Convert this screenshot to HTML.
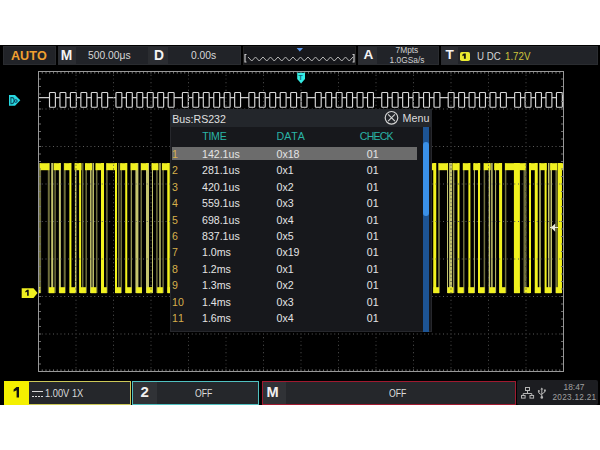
<!DOCTYPE html>
<html><head><meta charset="utf-8"><style>
*{margin:0;padding:0;box-sizing:border-box}
html,body{font-kerning:none;width:600px;height:450px;background:#fff;overflow:hidden;font-family:"Liberation Sans", sans-serif}
.scr{position:absolute;left:0;top:45px;width:600px;height:360px;background:#000}
.abs{position:absolute}
.box{position:absolute;background:#212328;border:1px solid #2a2c30}
.lbl{position:absolute;top:0;bottom:0;background:#2b2d32}
.t{position:absolute;white-space:nowrap;line-height:1}
.tr{position:absolute;left:0;height:14px}
.tr span{position:absolute;top:0;font-size:10.6px;line-height:14px;white-space:nowrap}
.tr .n{color:#d6b04c}
.tr .v{color:#e4e4e4}
svg{position:absolute;left:0;top:0}
</style></head><body>
<div class="scr"></div>
<svg width="600" height="450" viewBox="0 0 600 450">
<rect x="38.10" y="163" width="3" height="130" fill="#6e6e3c"/><rect x="47.80" y="163" width="2" height="130" fill="#6e6e3c"/><rect x="51.20" y="163" width="2" height="130" fill="#c4c46e"/><rect x="54.35" y="163" width="1.5" height="130" fill="#6e6e3c"/><rect x="58.90" y="163" width="2" height="130" fill="#c4c46e"/><rect x="63.70" y="163" width="2" height="130" fill="#6e6e3c"/><rect x="69.40" y="163" width="2" height="130" fill="#f2f21e"/><rect x="74.95" y="163" width="1.5" height="130" fill="#c4c46e"/><rect x="79.10" y="163" width="2" height="130" fill="#f2f21e"/><rect x="81.95" y="163" width="1.5" height="130" fill="#6e6e3c"/><rect x="85.45" y="163" width="1.5" height="130" fill="#6e6e3c"/><rect x="90.05" y="163" width="1.5" height="130" fill="#c4c46e"/><rect x="92.45" y="163" width="1.5" height="130" fill="#c4c46e"/><rect x="95.95" y="163" width="1.5" height="130" fill="#6e6e3c"/><rect x="101.00" y="163" width="3" height="130" fill="#f2f21e"/><rect x="106.15" y="163" width="1.5" height="130" fill="#6e6e3c"/><rect x="115.00" y="163" width="2" height="130" fill="#f2f21e"/><rect x="118.00" y="163" width="1.5" height="130" fill="#6e6e3c"/><rect x="120.50" y="163" width="1.5" height="130" fill="#6e6e3c"/><rect x="125.25" y="163" width="2" height="130" fill="#f2f21e"/><rect x="130.75" y="163" width="1" height="130" fill="#c4c46e"/><rect x="135.40" y="163" width="3" height="130" fill="#c4c46e"/><rect x="140.50" y="163" width="1.5" height="130" fill="#6e6e3c"/><rect x="146.00" y="163" width="3" height="130" fill="#c4c46e"/><rect x="152.00" y="163" width="1" height="130" fill="#c4c46e"/><rect x="156.15" y="163" width="1.5" height="130" fill="#6e6e3c"/><rect x="159.25" y="163" width="1.5" height="130" fill="#c4c46e"/><rect x="162.35" y="163" width="1.5" height="130" fill="#6e6e3c"/><rect x="167.25" y="163" width="2.5" height="130" fill="#f2f21e"/><rect x="433.25" y="163" width="3" height="130" fill="#f2f21e"/><rect x="438.50" y="163" width="1" height="130" fill="#c4c46e"/><rect x="447.00" y="163" width="1" height="130" fill="#c4c46e"/><rect x="449.10" y="163" width="3" height="130" fill="#c4c46e"/><rect x="453.25" y="163" width="1" height="130" fill="#c4c46e"/><rect x="457.50" y="163" width="2" height="130" fill="#f2f21e"/><rect x="463.00" y="163" width="1.5" height="130" fill="#6e6e3c"/><rect x="468.40" y="163" width="2" height="130" fill="#f2f21e"/><rect x="473.90" y="163" width="1" height="130" fill="#c4c46e"/><rect x="478.00" y="163" width="2" height="130" fill="#f2f21e"/><rect x="483.65" y="163" width="1.5" height="130" fill="#6e6e3c"/><rect x="488.65" y="163" width="1.5" height="130" fill="#c4c46e"/><rect x="491.15" y="163" width="1.5" height="130" fill="#c4c46e"/><rect x="495.10" y="163" width="1" height="130" fill="#c4c46e"/><rect x="499.10" y="163" width="3" height="130" fill="#f2f21e"/><rect x="504.85" y="163" width="1.5" height="130" fill="#6e6e3c"/><rect x="513.90" y="163" width="6" height="130" fill="#f2f21e"/><rect x="523.50" y="163" width="3" height="130" fill="#6e6e3c"/><rect x="529.00" y="163" width="2" height="130" fill="#f2f21e"/><rect x="534.75" y="163" width="3" height="130" fill="#f2f21e"/><rect x="539.25" y="163" width="1.5" height="130" fill="#c4c46e"/><rect x="544.60" y="163" width="2" height="130" fill="#f2f21e"/><rect x="548.00" y="163" width="1.5" height="130" fill="#c4c46e"/><rect x="550.50" y="163" width="1.5" height="130" fill="#c4c46e"/><rect x="555.40" y="163" width="1.8" height="130" fill="#6e6e3c"/><rect x="557.65" y="163" width="4.3" height="130" fill="#f2f21e"/><rect x="39.00" y="287.2" width="1.40" height="6" fill="#f0f020"/><rect x="39.80" y="163.2" width="9.60" height="7" fill="#f0f020"/><rect x="48.90" y="287.2" width="5.70" height="6" fill="#f0f020"/><rect x="53.65" y="163.2" width="7.00" height="7" fill="#f0f020"/><rect x="59.35" y="287.2" width="5.70" height="6" fill="#f0f020"/><rect x="64.10" y="163.2" width="7.00" height="7" fill="#f0f020"/><rect x="69.80" y="287.2" width="5.70" height="6" fill="#f0f020"/><rect x="74.55" y="163.2" width="7.00" height="7" fill="#f0f020"/><rect x="80.25" y="287.2" width="5.70" height="6" fill="#f0f020"/><rect x="85.00" y="163.2" width="7.00" height="7" fill="#f0f020"/><rect x="90.70" y="287.2" width="5.70" height="6" fill="#f0f020"/><rect x="95.45" y="163.2" width="7.00" height="7" fill="#f0f020"/><rect x="101.15" y="287.2" width="5.70" height="6" fill="#f0f020"/><rect x="106.25" y="163.2" width="9.60" height="7" fill="#f0f020"/><rect x="115.35" y="287.2" width="5.70" height="6" fill="#f0f020"/><rect x="120.10" y="163.2" width="7.00" height="7" fill="#f0f020"/><rect x="125.80" y="287.2" width="5.70" height="6" fill="#f0f020"/><rect x="130.55" y="163.2" width="7.00" height="7" fill="#f0f020"/><rect x="136.25" y="287.2" width="5.70" height="6" fill="#f0f020"/><rect x="141.00" y="163.2" width="7.00" height="7" fill="#f0f020"/><rect x="146.70" y="287.2" width="5.70" height="6" fill="#f0f020"/><rect x="151.45" y="163.2" width="7.00" height="7" fill="#f0f020"/><rect x="157.15" y="287.2" width="5.70" height="6" fill="#f0f020"/><rect x="161.90" y="163.2" width="7.00" height="7" fill="#f0f020"/><rect x="167.60" y="287.2" width="5.70" height="6" fill="#f0f020"/><rect x="172.70" y="163.2" width="9.60" height="7" fill="#f0f020"/><rect x="181.80" y="287.2" width="5.70" height="6" fill="#f0f020"/><rect x="186.55" y="163.2" width="7.00" height="7" fill="#f0f020"/><rect x="192.25" y="287.2" width="5.70" height="6" fill="#f0f020"/><rect x="197.00" y="163.2" width="7.00" height="7" fill="#f0f020"/><rect x="202.70" y="287.2" width="5.70" height="6" fill="#f0f020"/><rect x="207.45" y="163.2" width="7.00" height="7" fill="#f0f020"/><rect x="213.15" y="287.2" width="5.70" height="6" fill="#f0f020"/><rect x="217.90" y="163.2" width="7.00" height="7" fill="#f0f020"/><rect x="223.60" y="287.2" width="5.70" height="6" fill="#f0f020"/><rect x="228.35" y="163.2" width="7.00" height="7" fill="#f0f020"/><rect x="234.05" y="287.2" width="5.70" height="6" fill="#f0f020"/><rect x="239.15" y="163.2" width="9.60" height="7" fill="#f0f020"/><rect x="248.25" y="287.2" width="5.70" height="6" fill="#f0f020"/><rect x="253.00" y="163.2" width="7.00" height="7" fill="#f0f020"/><rect x="258.70" y="287.2" width="5.70" height="6" fill="#f0f020"/><rect x="263.45" y="163.2" width="7.00" height="7" fill="#f0f020"/><rect x="269.15" y="287.2" width="5.70" height="6" fill="#f0f020"/><rect x="273.90" y="163.2" width="7.00" height="7" fill="#f0f020"/><rect x="279.60" y="287.2" width="5.70" height="6" fill="#f0f020"/><rect x="284.35" y="163.2" width="7.00" height="7" fill="#f0f020"/><rect x="290.05" y="287.2" width="5.70" height="6" fill="#f0f020"/><rect x="294.80" y="163.2" width="7.00" height="7" fill="#f0f020"/><rect x="300.50" y="287.2" width="5.70" height="6" fill="#f0f020"/><rect x="305.60" y="163.2" width="9.60" height="7" fill="#f0f020"/><rect x="314.70" y="287.2" width="5.70" height="6" fill="#f0f020"/><rect x="319.45" y="163.2" width="7.00" height="7" fill="#f0f020"/><rect x="325.15" y="287.2" width="5.70" height="6" fill="#f0f020"/><rect x="329.90" y="163.2" width="7.00" height="7" fill="#f0f020"/><rect x="335.60" y="287.2" width="5.70" height="6" fill="#f0f020"/><rect x="340.35" y="163.2" width="7.00" height="7" fill="#f0f020"/><rect x="346.05" y="287.2" width="5.70" height="6" fill="#f0f020"/><rect x="350.80" y="163.2" width="7.00" height="7" fill="#f0f020"/><rect x="356.50" y="287.2" width="5.70" height="6" fill="#f0f020"/><rect x="361.25" y="163.2" width="7.00" height="7" fill="#f0f020"/><rect x="366.95" y="287.2" width="5.70" height="6" fill="#f0f020"/><rect x="372.05" y="163.2" width="9.60" height="7" fill="#f0f020"/><rect x="381.15" y="287.2" width="5.70" height="6" fill="#f0f020"/><rect x="385.90" y="163.2" width="7.00" height="7" fill="#f0f020"/><rect x="391.60" y="287.2" width="5.70" height="6" fill="#f0f020"/><rect x="396.35" y="163.2" width="7.00" height="7" fill="#f0f020"/><rect x="402.05" y="287.2" width="5.70" height="6" fill="#f0f020"/><rect x="406.80" y="163.2" width="7.00" height="7" fill="#f0f020"/><rect x="412.50" y="287.2" width="5.70" height="6" fill="#f0f020"/><rect x="417.25" y="163.2" width="7.00" height="7" fill="#f0f020"/><rect x="422.95" y="287.2" width="5.70" height="6" fill="#f0f020"/><rect x="427.70" y="163.2" width="7.00" height="7" fill="#f0f020"/><rect x="433.40" y="287.2" width="5.70" height="6" fill="#f0f020"/><rect x="438.50" y="163.2" width="9.60" height="7" fill="#f0f020"/><rect x="447.60" y="287.2" width="5.70" height="6" fill="#f0f020"/><rect x="452.35" y="163.2" width="7.00" height="7" fill="#f0f020"/><rect x="458.05" y="287.2" width="5.70" height="6" fill="#f0f020"/><rect x="462.80" y="163.2" width="7.00" height="7" fill="#f0f020"/><rect x="468.50" y="287.2" width="5.70" height="6" fill="#f0f020"/><rect x="473.25" y="163.2" width="7.00" height="7" fill="#f0f020"/><rect x="478.95" y="287.2" width="5.70" height="6" fill="#f0f020"/><rect x="483.70" y="163.2" width="7.00" height="7" fill="#f0f020"/><rect x="489.40" y="287.2" width="5.70" height="6" fill="#f0f020"/><rect x="494.15" y="163.2" width="7.00" height="7" fill="#f0f020"/><rect x="499.85" y="287.2" width="5.70" height="6" fill="#f0f020"/><rect x="504.95" y="163.2" width="9.60" height="7" fill="#f0f020"/><rect x="514.05" y="287.2" width="5.70" height="6" fill="#f0f020"/><rect x="518.80" y="163.2" width="7.00" height="7" fill="#f0f020"/><rect x="524.50" y="287.2" width="5.70" height="6" fill="#f0f020"/><rect x="529.25" y="163.2" width="7.00" height="7" fill="#f0f020"/><rect x="534.95" y="287.2" width="5.70" height="6" fill="#f0f020"/><rect x="539.70" y="163.2" width="7.00" height="7" fill="#f0f020"/><rect x="545.40" y="287.2" width="5.70" height="6" fill="#f0f020"/><rect x="550.15" y="163.2" width="7.00" height="7" fill="#f0f020"/><rect x="555.85" y="287.2" width="5.70" height="6" fill="#f0f020"/><rect x="560.60" y="163.2" width="2.40" height="7" fill="#f0f020"/>
<line x1="38" y1="97.7" x2="563" y2="97.7" stroke="#cccccc" stroke-width="1.2"/><rect x="49.50" y="92.5" width="5.90" height="14.7" rx="0.8" fill="#000" stroke="#d8d8d8" stroke-width="1.15"/><rect x="59.95" y="92.5" width="5.90" height="14.7" rx="0.8" fill="#000" stroke="#d8d8d8" stroke-width="1.15"/><rect x="70.40" y="92.5" width="5.90" height="14.7" rx="0.8" fill="#000" stroke="#d8d8d8" stroke-width="1.15"/><rect x="80.85" y="92.5" width="5.90" height="14.7" rx="0.8" fill="#000" stroke="#d8d8d8" stroke-width="1.15"/><rect x="91.30" y="92.5" width="5.90" height="14.7" rx="0.8" fill="#000" stroke="#d8d8d8" stroke-width="1.15"/><rect x="101.75" y="92.5" width="5.90" height="14.7" rx="0.8" fill="#000" stroke="#d8d8d8" stroke-width="1.15"/><rect x="115.95" y="92.5" width="5.90" height="14.7" rx="0.8" fill="#000" stroke="#d8d8d8" stroke-width="1.15"/><rect x="126.40" y="92.5" width="5.90" height="14.7" rx="0.8" fill="#000" stroke="#d8d8d8" stroke-width="1.15"/><rect x="136.85" y="92.5" width="5.90" height="14.7" rx="0.8" fill="#000" stroke="#d8d8d8" stroke-width="1.15"/><rect x="147.30" y="92.5" width="5.90" height="14.7" rx="0.8" fill="#000" stroke="#d8d8d8" stroke-width="1.15"/><rect x="157.75" y="92.5" width="5.90" height="14.7" rx="0.8" fill="#000" stroke="#d8d8d8" stroke-width="1.15"/><rect x="168.20" y="92.5" width="5.90" height="14.7" rx="0.8" fill="#000" stroke="#d8d8d8" stroke-width="1.15"/><rect x="182.40" y="92.5" width="5.90" height="14.7" rx="0.8" fill="#000" stroke="#d8d8d8" stroke-width="1.15"/><rect x="192.85" y="92.5" width="5.90" height="14.7" rx="0.8" fill="#000" stroke="#d8d8d8" stroke-width="1.15"/><rect x="203.30" y="92.5" width="5.90" height="14.7" rx="0.8" fill="#000" stroke="#d8d8d8" stroke-width="1.15"/><rect x="213.75" y="92.5" width="5.90" height="14.7" rx="0.8" fill="#000" stroke="#d8d8d8" stroke-width="1.15"/><rect x="224.20" y="92.5" width="5.90" height="14.7" rx="0.8" fill="#000" stroke="#d8d8d8" stroke-width="1.15"/><rect x="234.65" y="92.5" width="5.90" height="14.7" rx="0.8" fill="#000" stroke="#d8d8d8" stroke-width="1.15"/><rect x="248.85" y="92.5" width="5.90" height="14.7" rx="0.8" fill="#000" stroke="#d8d8d8" stroke-width="1.15"/><rect x="259.30" y="92.5" width="5.90" height="14.7" rx="0.8" fill="#000" stroke="#d8d8d8" stroke-width="1.15"/><rect x="269.75" y="92.5" width="5.90" height="14.7" rx="0.8" fill="#000" stroke="#d8d8d8" stroke-width="1.15"/><rect x="280.20" y="92.5" width="5.90" height="14.7" rx="0.8" fill="#000" stroke="#d8d8d8" stroke-width="1.15"/><rect x="290.65" y="92.5" width="5.90" height="14.7" rx="0.8" fill="#000" stroke="#d8d8d8" stroke-width="1.15"/><rect x="301.10" y="92.5" width="5.90" height="14.7" rx="0.8" fill="#000" stroke="#d8d8d8" stroke-width="1.15"/><rect x="315.30" y="92.5" width="5.90" height="14.7" rx="0.8" fill="#000" stroke="#d8d8d8" stroke-width="1.15"/><rect x="325.75" y="92.5" width="5.90" height="14.7" rx="0.8" fill="#000" stroke="#d8d8d8" stroke-width="1.15"/><rect x="336.20" y="92.5" width="5.90" height="14.7" rx="0.8" fill="#000" stroke="#d8d8d8" stroke-width="1.15"/><rect x="346.65" y="92.5" width="5.90" height="14.7" rx="0.8" fill="#000" stroke="#d8d8d8" stroke-width="1.15"/><rect x="357.10" y="92.5" width="5.90" height="14.7" rx="0.8" fill="#000" stroke="#d8d8d8" stroke-width="1.15"/><rect x="367.55" y="92.5" width="5.90" height="14.7" rx="0.8" fill="#000" stroke="#d8d8d8" stroke-width="1.15"/><rect x="381.75" y="92.5" width="5.90" height="14.7" rx="0.8" fill="#000" stroke="#d8d8d8" stroke-width="1.15"/><rect x="392.20" y="92.5" width="5.90" height="14.7" rx="0.8" fill="#000" stroke="#d8d8d8" stroke-width="1.15"/><rect x="402.65" y="92.5" width="5.90" height="14.7" rx="0.8" fill="#000" stroke="#d8d8d8" stroke-width="1.15"/><rect x="413.10" y="92.5" width="5.90" height="14.7" rx="0.8" fill="#000" stroke="#d8d8d8" stroke-width="1.15"/><rect x="423.55" y="92.5" width="5.90" height="14.7" rx="0.8" fill="#000" stroke="#d8d8d8" stroke-width="1.15"/><rect x="434.00" y="92.5" width="5.90" height="14.7" rx="0.8" fill="#000" stroke="#d8d8d8" stroke-width="1.15"/><rect x="448.20" y="92.5" width="5.90" height="14.7" rx="0.8" fill="#000" stroke="#d8d8d8" stroke-width="1.15"/><rect x="458.65" y="92.5" width="5.90" height="14.7" rx="0.8" fill="#000" stroke="#d8d8d8" stroke-width="1.15"/><rect x="469.10" y="92.5" width="5.90" height="14.7" rx="0.8" fill="#000" stroke="#d8d8d8" stroke-width="1.15"/><rect x="479.55" y="92.5" width="5.90" height="14.7" rx="0.8" fill="#000" stroke="#d8d8d8" stroke-width="1.15"/><rect x="490.00" y="92.5" width="5.90" height="14.7" rx="0.8" fill="#000" stroke="#d8d8d8" stroke-width="1.15"/><rect x="500.45" y="92.5" width="5.90" height="14.7" rx="0.8" fill="#000" stroke="#d8d8d8" stroke-width="1.15"/><rect x="514.65" y="92.5" width="5.90" height="14.7" rx="0.8" fill="#000" stroke="#d8d8d8" stroke-width="1.15"/><rect x="525.10" y="92.5" width="5.90" height="14.7" rx="0.8" fill="#000" stroke="#d8d8d8" stroke-width="1.15"/><rect x="535.55" y="92.5" width="5.90" height="14.7" rx="0.8" fill="#000" stroke="#d8d8d8" stroke-width="1.15"/><rect x="546.00" y="92.5" width="5.90" height="14.7" rx="0.8" fill="#000" stroke="#d8d8d8" stroke-width="1.15"/><rect x="556.45" y="92.5" width="5.90" height="14.7" rx="0.8" fill="#000" stroke="#d8d8d8" stroke-width="1.15"/>
<g fill="#5a5a5a"><rect x="75.50" y="74.75" width="1" height="1"/><rect x="75.50" y="82.25" width="1" height="1"/><rect x="75.50" y="89.75" width="1" height="1"/><rect x="75.50" y="97.25" width="1" height="1"/><rect x="75.50" y="104.75" width="1" height="1"/><rect x="75.50" y="112.25" width="1" height="1"/><rect x="75.50" y="119.75" width="1" height="1"/><rect x="75.50" y="127.25" width="1" height="1"/><rect x="75.50" y="134.75" width="1" height="1"/><rect x="75.50" y="142.25" width="1" height="1"/><rect x="75.50" y="149.75" width="1" height="1"/><rect x="75.50" y="157.25" width="1" height="1"/><rect x="75.50" y="164.75" width="1" height="1"/><rect x="75.50" y="172.25" width="1" height="1"/><rect x="75.50" y="179.75" width="1" height="1"/><rect x="75.50" y="187.25" width="1" height="1"/><rect x="75.50" y="194.75" width="1" height="1"/><rect x="75.50" y="202.25" width="1" height="1"/><rect x="75.50" y="209.75" width="1" height="1"/><rect x="75.50" y="217.25" width="1" height="1"/><rect x="75.50" y="224.75" width="1" height="1"/><rect x="75.50" y="232.25" width="1" height="1"/><rect x="75.50" y="239.75" width="1" height="1"/><rect x="75.50" y="247.25" width="1" height="1"/><rect x="75.50" y="254.75" width="1" height="1"/><rect x="75.50" y="262.25" width="1" height="1"/><rect x="75.50" y="269.75" width="1" height="1"/><rect x="75.50" y="277.25" width="1" height="1"/><rect x="75.50" y="284.75" width="1" height="1"/><rect x="75.50" y="292.25" width="1" height="1"/><rect x="75.50" y="299.75" width="1" height="1"/><rect x="75.50" y="307.25" width="1" height="1"/><rect x="75.50" y="314.75" width="1" height="1"/><rect x="75.50" y="322.25" width="1" height="1"/><rect x="75.50" y="329.75" width="1" height="1"/><rect x="75.50" y="337.25" width="1" height="1"/><rect x="75.50" y="344.75" width="1" height="1"/><rect x="75.50" y="352.25" width="1" height="1"/><rect x="75.50" y="359.75" width="1" height="1"/><rect x="75.50" y="367.25" width="1" height="1"/><rect x="113.00" y="74.75" width="1" height="1"/><rect x="113.00" y="82.25" width="1" height="1"/><rect x="113.00" y="89.75" width="1" height="1"/><rect x="113.00" y="97.25" width="1" height="1"/><rect x="113.00" y="104.75" width="1" height="1"/><rect x="113.00" y="112.25" width="1" height="1"/><rect x="113.00" y="119.75" width="1" height="1"/><rect x="113.00" y="127.25" width="1" height="1"/><rect x="113.00" y="134.75" width="1" height="1"/><rect x="113.00" y="142.25" width="1" height="1"/><rect x="113.00" y="149.75" width="1" height="1"/><rect x="113.00" y="157.25" width="1" height="1"/><rect x="113.00" y="164.75" width="1" height="1"/><rect x="113.00" y="172.25" width="1" height="1"/><rect x="113.00" y="179.75" width="1" height="1"/><rect x="113.00" y="187.25" width="1" height="1"/><rect x="113.00" y="194.75" width="1" height="1"/><rect x="113.00" y="202.25" width="1" height="1"/><rect x="113.00" y="209.75" width="1" height="1"/><rect x="113.00" y="217.25" width="1" height="1"/><rect x="113.00" y="224.75" width="1" height="1"/><rect x="113.00" y="232.25" width="1" height="1"/><rect x="113.00" y="239.75" width="1" height="1"/><rect x="113.00" y="247.25" width="1" height="1"/><rect x="113.00" y="254.75" width="1" height="1"/><rect x="113.00" y="262.25" width="1" height="1"/><rect x="113.00" y="269.75" width="1" height="1"/><rect x="113.00" y="277.25" width="1" height="1"/><rect x="113.00" y="284.75" width="1" height="1"/><rect x="113.00" y="292.25" width="1" height="1"/><rect x="113.00" y="299.75" width="1" height="1"/><rect x="113.00" y="307.25" width="1" height="1"/><rect x="113.00" y="314.75" width="1" height="1"/><rect x="113.00" y="322.25" width="1" height="1"/><rect x="113.00" y="329.75" width="1" height="1"/><rect x="113.00" y="337.25" width="1" height="1"/><rect x="113.00" y="344.75" width="1" height="1"/><rect x="113.00" y="352.25" width="1" height="1"/><rect x="113.00" y="359.75" width="1" height="1"/><rect x="113.00" y="367.25" width="1" height="1"/><rect x="150.50" y="74.75" width="1" height="1"/><rect x="150.50" y="82.25" width="1" height="1"/><rect x="150.50" y="89.75" width="1" height="1"/><rect x="150.50" y="97.25" width="1" height="1"/><rect x="150.50" y="104.75" width="1" height="1"/><rect x="150.50" y="112.25" width="1" height="1"/><rect x="150.50" y="119.75" width="1" height="1"/><rect x="150.50" y="127.25" width="1" height="1"/><rect x="150.50" y="134.75" width="1" height="1"/><rect x="150.50" y="142.25" width="1" height="1"/><rect x="150.50" y="149.75" width="1" height="1"/><rect x="150.50" y="157.25" width="1" height="1"/><rect x="150.50" y="164.75" width="1" height="1"/><rect x="150.50" y="172.25" width="1" height="1"/><rect x="150.50" y="179.75" width="1" height="1"/><rect x="150.50" y="187.25" width="1" height="1"/><rect x="150.50" y="194.75" width="1" height="1"/><rect x="150.50" y="202.25" width="1" height="1"/><rect x="150.50" y="209.75" width="1" height="1"/><rect x="150.50" y="217.25" width="1" height="1"/><rect x="150.50" y="224.75" width="1" height="1"/><rect x="150.50" y="232.25" width="1" height="1"/><rect x="150.50" y="239.75" width="1" height="1"/><rect x="150.50" y="247.25" width="1" height="1"/><rect x="150.50" y="254.75" width="1" height="1"/><rect x="150.50" y="262.25" width="1" height="1"/><rect x="150.50" y="269.75" width="1" height="1"/><rect x="150.50" y="277.25" width="1" height="1"/><rect x="150.50" y="284.75" width="1" height="1"/><rect x="150.50" y="292.25" width="1" height="1"/><rect x="150.50" y="299.75" width="1" height="1"/><rect x="150.50" y="307.25" width="1" height="1"/><rect x="150.50" y="314.75" width="1" height="1"/><rect x="150.50" y="322.25" width="1" height="1"/><rect x="150.50" y="329.75" width="1" height="1"/><rect x="150.50" y="337.25" width="1" height="1"/><rect x="150.50" y="344.75" width="1" height="1"/><rect x="150.50" y="352.25" width="1" height="1"/><rect x="150.50" y="359.75" width="1" height="1"/><rect x="150.50" y="367.25" width="1" height="1"/><rect x="188.00" y="74.75" width="1" height="1"/><rect x="188.00" y="82.25" width="1" height="1"/><rect x="188.00" y="89.75" width="1" height="1"/><rect x="188.00" y="97.25" width="1" height="1"/><rect x="188.00" y="104.75" width="1" height="1"/><rect x="188.00" y="112.25" width="1" height="1"/><rect x="188.00" y="119.75" width="1" height="1"/><rect x="188.00" y="127.25" width="1" height="1"/><rect x="188.00" y="134.75" width="1" height="1"/><rect x="188.00" y="142.25" width="1" height="1"/><rect x="188.00" y="149.75" width="1" height="1"/><rect x="188.00" y="157.25" width="1" height="1"/><rect x="188.00" y="164.75" width="1" height="1"/><rect x="188.00" y="172.25" width="1" height="1"/><rect x="188.00" y="179.75" width="1" height="1"/><rect x="188.00" y="187.25" width="1" height="1"/><rect x="188.00" y="194.75" width="1" height="1"/><rect x="188.00" y="202.25" width="1" height="1"/><rect x="188.00" y="209.75" width="1" height="1"/><rect x="188.00" y="217.25" width="1" height="1"/><rect x="188.00" y="224.75" width="1" height="1"/><rect x="188.00" y="232.25" width="1" height="1"/><rect x="188.00" y="239.75" width="1" height="1"/><rect x="188.00" y="247.25" width="1" height="1"/><rect x="188.00" y="254.75" width="1" height="1"/><rect x="188.00" y="262.25" width="1" height="1"/><rect x="188.00" y="269.75" width="1" height="1"/><rect x="188.00" y="277.25" width="1" height="1"/><rect x="188.00" y="284.75" width="1" height="1"/><rect x="188.00" y="292.25" width="1" height="1"/><rect x="188.00" y="299.75" width="1" height="1"/><rect x="188.00" y="307.25" width="1" height="1"/><rect x="188.00" y="314.75" width="1" height="1"/><rect x="188.00" y="322.25" width="1" height="1"/><rect x="188.00" y="329.75" width="1" height="1"/><rect x="188.00" y="337.25" width="1" height="1"/><rect x="188.00" y="344.75" width="1" height="1"/><rect x="188.00" y="352.25" width="1" height="1"/><rect x="188.00" y="359.75" width="1" height="1"/><rect x="188.00" y="367.25" width="1" height="1"/><rect x="225.50" y="74.75" width="1" height="1"/><rect x="225.50" y="82.25" width="1" height="1"/><rect x="225.50" y="89.75" width="1" height="1"/><rect x="225.50" y="97.25" width="1" height="1"/><rect x="225.50" y="104.75" width="1" height="1"/><rect x="225.50" y="112.25" width="1" height="1"/><rect x="225.50" y="119.75" width="1" height="1"/><rect x="225.50" y="127.25" width="1" height="1"/><rect x="225.50" y="134.75" width="1" height="1"/><rect x="225.50" y="142.25" width="1" height="1"/><rect x="225.50" y="149.75" width="1" height="1"/><rect x="225.50" y="157.25" width="1" height="1"/><rect x="225.50" y="164.75" width="1" height="1"/><rect x="225.50" y="172.25" width="1" height="1"/><rect x="225.50" y="179.75" width="1" height="1"/><rect x="225.50" y="187.25" width="1" height="1"/><rect x="225.50" y="194.75" width="1" height="1"/><rect x="225.50" y="202.25" width="1" height="1"/><rect x="225.50" y="209.75" width="1" height="1"/><rect x="225.50" y="217.25" width="1" height="1"/><rect x="225.50" y="224.75" width="1" height="1"/><rect x="225.50" y="232.25" width="1" height="1"/><rect x="225.50" y="239.75" width="1" height="1"/><rect x="225.50" y="247.25" width="1" height="1"/><rect x="225.50" y="254.75" width="1" height="1"/><rect x="225.50" y="262.25" width="1" height="1"/><rect x="225.50" y="269.75" width="1" height="1"/><rect x="225.50" y="277.25" width="1" height="1"/><rect x="225.50" y="284.75" width="1" height="1"/><rect x="225.50" y="292.25" width="1" height="1"/><rect x="225.50" y="299.75" width="1" height="1"/><rect x="225.50" y="307.25" width="1" height="1"/><rect x="225.50" y="314.75" width="1" height="1"/><rect x="225.50" y="322.25" width="1" height="1"/><rect x="225.50" y="329.75" width="1" height="1"/><rect x="225.50" y="337.25" width="1" height="1"/><rect x="225.50" y="344.75" width="1" height="1"/><rect x="225.50" y="352.25" width="1" height="1"/><rect x="225.50" y="359.75" width="1" height="1"/><rect x="225.50" y="367.25" width="1" height="1"/><rect x="263.00" y="74.75" width="1" height="1"/><rect x="263.00" y="82.25" width="1" height="1"/><rect x="263.00" y="89.75" width="1" height="1"/><rect x="263.00" y="97.25" width="1" height="1"/><rect x="263.00" y="104.75" width="1" height="1"/><rect x="263.00" y="112.25" width="1" height="1"/><rect x="263.00" y="119.75" width="1" height="1"/><rect x="263.00" y="127.25" width="1" height="1"/><rect x="263.00" y="134.75" width="1" height="1"/><rect x="263.00" y="142.25" width="1" height="1"/><rect x="263.00" y="149.75" width="1" height="1"/><rect x="263.00" y="157.25" width="1" height="1"/><rect x="263.00" y="164.75" width="1" height="1"/><rect x="263.00" y="172.25" width="1" height="1"/><rect x="263.00" y="179.75" width="1" height="1"/><rect x="263.00" y="187.25" width="1" height="1"/><rect x="263.00" y="194.75" width="1" height="1"/><rect x="263.00" y="202.25" width="1" height="1"/><rect x="263.00" y="209.75" width="1" height="1"/><rect x="263.00" y="217.25" width="1" height="1"/><rect x="263.00" y="224.75" width="1" height="1"/><rect x="263.00" y="232.25" width="1" height="1"/><rect x="263.00" y="239.75" width="1" height="1"/><rect x="263.00" y="247.25" width="1" height="1"/><rect x="263.00" y="254.75" width="1" height="1"/><rect x="263.00" y="262.25" width="1" height="1"/><rect x="263.00" y="269.75" width="1" height="1"/><rect x="263.00" y="277.25" width="1" height="1"/><rect x="263.00" y="284.75" width="1" height="1"/><rect x="263.00" y="292.25" width="1" height="1"/><rect x="263.00" y="299.75" width="1" height="1"/><rect x="263.00" y="307.25" width="1" height="1"/><rect x="263.00" y="314.75" width="1" height="1"/><rect x="263.00" y="322.25" width="1" height="1"/><rect x="263.00" y="329.75" width="1" height="1"/><rect x="263.00" y="337.25" width="1" height="1"/><rect x="263.00" y="344.75" width="1" height="1"/><rect x="263.00" y="352.25" width="1" height="1"/><rect x="263.00" y="359.75" width="1" height="1"/><rect x="263.00" y="367.25" width="1" height="1"/><rect x="300.50" y="74.75" width="1" height="1"/><rect x="300.50" y="82.25" width="1" height="1"/><rect x="300.50" y="89.75" width="1" height="1"/><rect x="300.50" y="97.25" width="1" height="1"/><rect x="300.50" y="104.75" width="1" height="1"/><rect x="300.50" y="112.25" width="1" height="1"/><rect x="300.50" y="119.75" width="1" height="1"/><rect x="300.50" y="127.25" width="1" height="1"/><rect x="300.50" y="134.75" width="1" height="1"/><rect x="300.50" y="142.25" width="1" height="1"/><rect x="300.50" y="149.75" width="1" height="1"/><rect x="300.50" y="157.25" width="1" height="1"/><rect x="300.50" y="164.75" width="1" height="1"/><rect x="300.50" y="172.25" width="1" height="1"/><rect x="300.50" y="179.75" width="1" height="1"/><rect x="300.50" y="187.25" width="1" height="1"/><rect x="300.50" y="194.75" width="1" height="1"/><rect x="300.50" y="202.25" width="1" height="1"/><rect x="300.50" y="209.75" width="1" height="1"/><rect x="300.50" y="217.25" width="1" height="1"/><rect x="300.50" y="224.75" width="1" height="1"/><rect x="300.50" y="232.25" width="1" height="1"/><rect x="300.50" y="239.75" width="1" height="1"/><rect x="300.50" y="247.25" width="1" height="1"/><rect x="300.50" y="254.75" width="1" height="1"/><rect x="300.50" y="262.25" width="1" height="1"/><rect x="300.50" y="269.75" width="1" height="1"/><rect x="300.50" y="277.25" width="1" height="1"/><rect x="300.50" y="284.75" width="1" height="1"/><rect x="300.50" y="292.25" width="1" height="1"/><rect x="300.50" y="299.75" width="1" height="1"/><rect x="300.50" y="307.25" width="1" height="1"/><rect x="300.50" y="314.75" width="1" height="1"/><rect x="300.50" y="322.25" width="1" height="1"/><rect x="300.50" y="329.75" width="1" height="1"/><rect x="300.50" y="337.25" width="1" height="1"/><rect x="300.50" y="344.75" width="1" height="1"/><rect x="300.50" y="352.25" width="1" height="1"/><rect x="300.50" y="359.75" width="1" height="1"/><rect x="300.50" y="367.25" width="1" height="1"/><rect x="338.00" y="74.75" width="1" height="1"/><rect x="338.00" y="82.25" width="1" height="1"/><rect x="338.00" y="89.75" width="1" height="1"/><rect x="338.00" y="97.25" width="1" height="1"/><rect x="338.00" y="104.75" width="1" height="1"/><rect x="338.00" y="112.25" width="1" height="1"/><rect x="338.00" y="119.75" width="1" height="1"/><rect x="338.00" y="127.25" width="1" height="1"/><rect x="338.00" y="134.75" width="1" height="1"/><rect x="338.00" y="142.25" width="1" height="1"/><rect x="338.00" y="149.75" width="1" height="1"/><rect x="338.00" y="157.25" width="1" height="1"/><rect x="338.00" y="164.75" width="1" height="1"/><rect x="338.00" y="172.25" width="1" height="1"/><rect x="338.00" y="179.75" width="1" height="1"/><rect x="338.00" y="187.25" width="1" height="1"/><rect x="338.00" y="194.75" width="1" height="1"/><rect x="338.00" y="202.25" width="1" height="1"/><rect x="338.00" y="209.75" width="1" height="1"/><rect x="338.00" y="217.25" width="1" height="1"/><rect x="338.00" y="224.75" width="1" height="1"/><rect x="338.00" y="232.25" width="1" height="1"/><rect x="338.00" y="239.75" width="1" height="1"/><rect x="338.00" y="247.25" width="1" height="1"/><rect x="338.00" y="254.75" width="1" height="1"/><rect x="338.00" y="262.25" width="1" height="1"/><rect x="338.00" y="269.75" width="1" height="1"/><rect x="338.00" y="277.25" width="1" height="1"/><rect x="338.00" y="284.75" width="1" height="1"/><rect x="338.00" y="292.25" width="1" height="1"/><rect x="338.00" y="299.75" width="1" height="1"/><rect x="338.00" y="307.25" width="1" height="1"/><rect x="338.00" y="314.75" width="1" height="1"/><rect x="338.00" y="322.25" width="1" height="1"/><rect x="338.00" y="329.75" width="1" height="1"/><rect x="338.00" y="337.25" width="1" height="1"/><rect x="338.00" y="344.75" width="1" height="1"/><rect x="338.00" y="352.25" width="1" height="1"/><rect x="338.00" y="359.75" width="1" height="1"/><rect x="338.00" y="367.25" width="1" height="1"/><rect x="375.50" y="74.75" width="1" height="1"/><rect x="375.50" y="82.25" width="1" height="1"/><rect x="375.50" y="89.75" width="1" height="1"/><rect x="375.50" y="97.25" width="1" height="1"/><rect x="375.50" y="104.75" width="1" height="1"/><rect x="375.50" y="112.25" width="1" height="1"/><rect x="375.50" y="119.75" width="1" height="1"/><rect x="375.50" y="127.25" width="1" height="1"/><rect x="375.50" y="134.75" width="1" height="1"/><rect x="375.50" y="142.25" width="1" height="1"/><rect x="375.50" y="149.75" width="1" height="1"/><rect x="375.50" y="157.25" width="1" height="1"/><rect x="375.50" y="164.75" width="1" height="1"/><rect x="375.50" y="172.25" width="1" height="1"/><rect x="375.50" y="179.75" width="1" height="1"/><rect x="375.50" y="187.25" width="1" height="1"/><rect x="375.50" y="194.75" width="1" height="1"/><rect x="375.50" y="202.25" width="1" height="1"/><rect x="375.50" y="209.75" width="1" height="1"/><rect x="375.50" y="217.25" width="1" height="1"/><rect x="375.50" y="224.75" width="1" height="1"/><rect x="375.50" y="232.25" width="1" height="1"/><rect x="375.50" y="239.75" width="1" height="1"/><rect x="375.50" y="247.25" width="1" height="1"/><rect x="375.50" y="254.75" width="1" height="1"/><rect x="375.50" y="262.25" width="1" height="1"/><rect x="375.50" y="269.75" width="1" height="1"/><rect x="375.50" y="277.25" width="1" height="1"/><rect x="375.50" y="284.75" width="1" height="1"/><rect x="375.50" y="292.25" width="1" height="1"/><rect x="375.50" y="299.75" width="1" height="1"/><rect x="375.50" y="307.25" width="1" height="1"/><rect x="375.50" y="314.75" width="1" height="1"/><rect x="375.50" y="322.25" width="1" height="1"/><rect x="375.50" y="329.75" width="1" height="1"/><rect x="375.50" y="337.25" width="1" height="1"/><rect x="375.50" y="344.75" width="1" height="1"/><rect x="375.50" y="352.25" width="1" height="1"/><rect x="375.50" y="359.75" width="1" height="1"/><rect x="375.50" y="367.25" width="1" height="1"/><rect x="413.00" y="74.75" width="1" height="1"/><rect x="413.00" y="82.25" width="1" height="1"/><rect x="413.00" y="89.75" width="1" height="1"/><rect x="413.00" y="97.25" width="1" height="1"/><rect x="413.00" y="104.75" width="1" height="1"/><rect x="413.00" y="112.25" width="1" height="1"/><rect x="413.00" y="119.75" width="1" height="1"/><rect x="413.00" y="127.25" width="1" height="1"/><rect x="413.00" y="134.75" width="1" height="1"/><rect x="413.00" y="142.25" width="1" height="1"/><rect x="413.00" y="149.75" width="1" height="1"/><rect x="413.00" y="157.25" width="1" height="1"/><rect x="413.00" y="164.75" width="1" height="1"/><rect x="413.00" y="172.25" width="1" height="1"/><rect x="413.00" y="179.75" width="1" height="1"/><rect x="413.00" y="187.25" width="1" height="1"/><rect x="413.00" y="194.75" width="1" height="1"/><rect x="413.00" y="202.25" width="1" height="1"/><rect x="413.00" y="209.75" width="1" height="1"/><rect x="413.00" y="217.25" width="1" height="1"/><rect x="413.00" y="224.75" width="1" height="1"/><rect x="413.00" y="232.25" width="1" height="1"/><rect x="413.00" y="239.75" width="1" height="1"/><rect x="413.00" y="247.25" width="1" height="1"/><rect x="413.00" y="254.75" width="1" height="1"/><rect x="413.00" y="262.25" width="1" height="1"/><rect x="413.00" y="269.75" width="1" height="1"/><rect x="413.00" y="277.25" width="1" height="1"/><rect x="413.00" y="284.75" width="1" height="1"/><rect x="413.00" y="292.25" width="1" height="1"/><rect x="413.00" y="299.75" width="1" height="1"/><rect x="413.00" y="307.25" width="1" height="1"/><rect x="413.00" y="314.75" width="1" height="1"/><rect x="413.00" y="322.25" width="1" height="1"/><rect x="413.00" y="329.75" width="1" height="1"/><rect x="413.00" y="337.25" width="1" height="1"/><rect x="413.00" y="344.75" width="1" height="1"/><rect x="413.00" y="352.25" width="1" height="1"/><rect x="413.00" y="359.75" width="1" height="1"/><rect x="413.00" y="367.25" width="1" height="1"/><rect x="450.50" y="74.75" width="1" height="1"/><rect x="450.50" y="82.25" width="1" height="1"/><rect x="450.50" y="89.75" width="1" height="1"/><rect x="450.50" y="97.25" width="1" height="1"/><rect x="450.50" y="104.75" width="1" height="1"/><rect x="450.50" y="112.25" width="1" height="1"/><rect x="450.50" y="119.75" width="1" height="1"/><rect x="450.50" y="127.25" width="1" height="1"/><rect x="450.50" y="134.75" width="1" height="1"/><rect x="450.50" y="142.25" width="1" height="1"/><rect x="450.50" y="149.75" width="1" height="1"/><rect x="450.50" y="157.25" width="1" height="1"/><rect x="450.50" y="164.75" width="1" height="1"/><rect x="450.50" y="172.25" width="1" height="1"/><rect x="450.50" y="179.75" width="1" height="1"/><rect x="450.50" y="187.25" width="1" height="1"/><rect x="450.50" y="194.75" width="1" height="1"/><rect x="450.50" y="202.25" width="1" height="1"/><rect x="450.50" y="209.75" width="1" height="1"/><rect x="450.50" y="217.25" width="1" height="1"/><rect x="450.50" y="224.75" width="1" height="1"/><rect x="450.50" y="232.25" width="1" height="1"/><rect x="450.50" y="239.75" width="1" height="1"/><rect x="450.50" y="247.25" width="1" height="1"/><rect x="450.50" y="254.75" width="1" height="1"/><rect x="450.50" y="262.25" width="1" height="1"/><rect x="450.50" y="269.75" width="1" height="1"/><rect x="450.50" y="277.25" width="1" height="1"/><rect x="450.50" y="284.75" width="1" height="1"/><rect x="450.50" y="292.25" width="1" height="1"/><rect x="450.50" y="299.75" width="1" height="1"/><rect x="450.50" y="307.25" width="1" height="1"/><rect x="450.50" y="314.75" width="1" height="1"/><rect x="450.50" y="322.25" width="1" height="1"/><rect x="450.50" y="329.75" width="1" height="1"/><rect x="450.50" y="337.25" width="1" height="1"/><rect x="450.50" y="344.75" width="1" height="1"/><rect x="450.50" y="352.25" width="1" height="1"/><rect x="450.50" y="359.75" width="1" height="1"/><rect x="450.50" y="367.25" width="1" height="1"/><rect x="488.00" y="74.75" width="1" height="1"/><rect x="488.00" y="82.25" width="1" height="1"/><rect x="488.00" y="89.75" width="1" height="1"/><rect x="488.00" y="97.25" width="1" height="1"/><rect x="488.00" y="104.75" width="1" height="1"/><rect x="488.00" y="112.25" width="1" height="1"/><rect x="488.00" y="119.75" width="1" height="1"/><rect x="488.00" y="127.25" width="1" height="1"/><rect x="488.00" y="134.75" width="1" height="1"/><rect x="488.00" y="142.25" width="1" height="1"/><rect x="488.00" y="149.75" width="1" height="1"/><rect x="488.00" y="157.25" width="1" height="1"/><rect x="488.00" y="164.75" width="1" height="1"/><rect x="488.00" y="172.25" width="1" height="1"/><rect x="488.00" y="179.75" width="1" height="1"/><rect x="488.00" y="187.25" width="1" height="1"/><rect x="488.00" y="194.75" width="1" height="1"/><rect x="488.00" y="202.25" width="1" height="1"/><rect x="488.00" y="209.75" width="1" height="1"/><rect x="488.00" y="217.25" width="1" height="1"/><rect x="488.00" y="224.75" width="1" height="1"/><rect x="488.00" y="232.25" width="1" height="1"/><rect x="488.00" y="239.75" width="1" height="1"/><rect x="488.00" y="247.25" width="1" height="1"/><rect x="488.00" y="254.75" width="1" height="1"/><rect x="488.00" y="262.25" width="1" height="1"/><rect x="488.00" y="269.75" width="1" height="1"/><rect x="488.00" y="277.25" width="1" height="1"/><rect x="488.00" y="284.75" width="1" height="1"/><rect x="488.00" y="292.25" width="1" height="1"/><rect x="488.00" y="299.75" width="1" height="1"/><rect x="488.00" y="307.25" width="1" height="1"/><rect x="488.00" y="314.75" width="1" height="1"/><rect x="488.00" y="322.25" width="1" height="1"/><rect x="488.00" y="329.75" width="1" height="1"/><rect x="488.00" y="337.25" width="1" height="1"/><rect x="488.00" y="344.75" width="1" height="1"/><rect x="488.00" y="352.25" width="1" height="1"/><rect x="488.00" y="359.75" width="1" height="1"/><rect x="488.00" y="367.25" width="1" height="1"/><rect x="525.50" y="74.75" width="1" height="1"/><rect x="525.50" y="82.25" width="1" height="1"/><rect x="525.50" y="89.75" width="1" height="1"/><rect x="525.50" y="97.25" width="1" height="1"/><rect x="525.50" y="104.75" width="1" height="1"/><rect x="525.50" y="112.25" width="1" height="1"/><rect x="525.50" y="119.75" width="1" height="1"/><rect x="525.50" y="127.25" width="1" height="1"/><rect x="525.50" y="134.75" width="1" height="1"/><rect x="525.50" y="142.25" width="1" height="1"/><rect x="525.50" y="149.75" width="1" height="1"/><rect x="525.50" y="157.25" width="1" height="1"/><rect x="525.50" y="164.75" width="1" height="1"/><rect x="525.50" y="172.25" width="1" height="1"/><rect x="525.50" y="179.75" width="1" height="1"/><rect x="525.50" y="187.25" width="1" height="1"/><rect x="525.50" y="194.75" width="1" height="1"/><rect x="525.50" y="202.25" width="1" height="1"/><rect x="525.50" y="209.75" width="1" height="1"/><rect x="525.50" y="217.25" width="1" height="1"/><rect x="525.50" y="224.75" width="1" height="1"/><rect x="525.50" y="232.25" width="1" height="1"/><rect x="525.50" y="239.75" width="1" height="1"/><rect x="525.50" y="247.25" width="1" height="1"/><rect x="525.50" y="254.75" width="1" height="1"/><rect x="525.50" y="262.25" width="1" height="1"/><rect x="525.50" y="269.75" width="1" height="1"/><rect x="525.50" y="277.25" width="1" height="1"/><rect x="525.50" y="284.75" width="1" height="1"/><rect x="525.50" y="292.25" width="1" height="1"/><rect x="525.50" y="299.75" width="1" height="1"/><rect x="525.50" y="307.25" width="1" height="1"/><rect x="525.50" y="314.75" width="1" height="1"/><rect x="525.50" y="322.25" width="1" height="1"/><rect x="525.50" y="329.75" width="1" height="1"/><rect x="525.50" y="337.25" width="1" height="1"/><rect x="525.50" y="344.75" width="1" height="1"/><rect x="525.50" y="352.25" width="1" height="1"/><rect x="525.50" y="359.75" width="1" height="1"/><rect x="525.50" y="367.25" width="1" height="1"/><rect x="41.75" y="108.50" width="1" height="1"/><rect x="45.50" y="108.50" width="1" height="1"/><rect x="49.25" y="108.50" width="1" height="1"/><rect x="53.00" y="108.50" width="1" height="1"/><rect x="56.75" y="108.50" width="1" height="1"/><rect x="60.50" y="108.50" width="1" height="1"/><rect x="64.25" y="108.50" width="1" height="1"/><rect x="68.00" y="108.50" width="1" height="1"/><rect x="71.75" y="108.50" width="1" height="1"/><rect x="75.50" y="108.50" width="1" height="1"/><rect x="79.25" y="108.50" width="1" height="1"/><rect x="83.00" y="108.50" width="1" height="1"/><rect x="86.75" y="108.50" width="1" height="1"/><rect x="90.50" y="108.50" width="1" height="1"/><rect x="94.25" y="108.50" width="1" height="1"/><rect x="98.00" y="108.50" width="1" height="1"/><rect x="101.75" y="108.50" width="1" height="1"/><rect x="105.50" y="108.50" width="1" height="1"/><rect x="109.25" y="108.50" width="1" height="1"/><rect x="113.00" y="108.50" width="1" height="1"/><rect x="116.75" y="108.50" width="1" height="1"/><rect x="120.50" y="108.50" width="1" height="1"/><rect x="124.25" y="108.50" width="1" height="1"/><rect x="128.00" y="108.50" width="1" height="1"/><rect x="131.75" y="108.50" width="1" height="1"/><rect x="135.50" y="108.50" width="1" height="1"/><rect x="139.25" y="108.50" width="1" height="1"/><rect x="143.00" y="108.50" width="1" height="1"/><rect x="146.75" y="108.50" width="1" height="1"/><rect x="150.50" y="108.50" width="1" height="1"/><rect x="154.25" y="108.50" width="1" height="1"/><rect x="158.00" y="108.50" width="1" height="1"/><rect x="161.75" y="108.50" width="1" height="1"/><rect x="165.50" y="108.50" width="1" height="1"/><rect x="169.25" y="108.50" width="1" height="1"/><rect x="173.00" y="108.50" width="1" height="1"/><rect x="176.75" y="108.50" width="1" height="1"/><rect x="180.50" y="108.50" width="1" height="1"/><rect x="184.25" y="108.50" width="1" height="1"/><rect x="188.00" y="108.50" width="1" height="1"/><rect x="191.75" y="108.50" width="1" height="1"/><rect x="195.50" y="108.50" width="1" height="1"/><rect x="199.25" y="108.50" width="1" height="1"/><rect x="203.00" y="108.50" width="1" height="1"/><rect x="206.75" y="108.50" width="1" height="1"/><rect x="210.50" y="108.50" width="1" height="1"/><rect x="214.25" y="108.50" width="1" height="1"/><rect x="218.00" y="108.50" width="1" height="1"/><rect x="221.75" y="108.50" width="1" height="1"/><rect x="225.50" y="108.50" width="1" height="1"/><rect x="229.25" y="108.50" width="1" height="1"/><rect x="233.00" y="108.50" width="1" height="1"/><rect x="236.75" y="108.50" width="1" height="1"/><rect x="240.50" y="108.50" width="1" height="1"/><rect x="244.25" y="108.50" width="1" height="1"/><rect x="248.00" y="108.50" width="1" height="1"/><rect x="251.75" y="108.50" width="1" height="1"/><rect x="255.50" y="108.50" width="1" height="1"/><rect x="259.25" y="108.50" width="1" height="1"/><rect x="263.00" y="108.50" width="1" height="1"/><rect x="266.75" y="108.50" width="1" height="1"/><rect x="270.50" y="108.50" width="1" height="1"/><rect x="274.25" y="108.50" width="1" height="1"/><rect x="278.00" y="108.50" width="1" height="1"/><rect x="281.75" y="108.50" width="1" height="1"/><rect x="285.50" y="108.50" width="1" height="1"/><rect x="289.25" y="108.50" width="1" height="1"/><rect x="293.00" y="108.50" width="1" height="1"/><rect x="296.75" y="108.50" width="1" height="1"/><rect x="300.50" y="108.50" width="1" height="1"/><rect x="304.25" y="108.50" width="1" height="1"/><rect x="308.00" y="108.50" width="1" height="1"/><rect x="311.75" y="108.50" width="1" height="1"/><rect x="315.50" y="108.50" width="1" height="1"/><rect x="319.25" y="108.50" width="1" height="1"/><rect x="323.00" y="108.50" width="1" height="1"/><rect x="326.75" y="108.50" width="1" height="1"/><rect x="330.50" y="108.50" width="1" height="1"/><rect x="334.25" y="108.50" width="1" height="1"/><rect x="338.00" y="108.50" width="1" height="1"/><rect x="341.75" y="108.50" width="1" height="1"/><rect x="345.50" y="108.50" width="1" height="1"/><rect x="349.25" y="108.50" width="1" height="1"/><rect x="353.00" y="108.50" width="1" height="1"/><rect x="356.75" y="108.50" width="1" height="1"/><rect x="360.50" y="108.50" width="1" height="1"/><rect x="364.25" y="108.50" width="1" height="1"/><rect x="368.00" y="108.50" width="1" height="1"/><rect x="371.75" y="108.50" width="1" height="1"/><rect x="375.50" y="108.50" width="1" height="1"/><rect x="379.25" y="108.50" width="1" height="1"/><rect x="383.00" y="108.50" width="1" height="1"/><rect x="386.75" y="108.50" width="1" height="1"/><rect x="390.50" y="108.50" width="1" height="1"/><rect x="394.25" y="108.50" width="1" height="1"/><rect x="398.00" y="108.50" width="1" height="1"/><rect x="401.75" y="108.50" width="1" height="1"/><rect x="405.50" y="108.50" width="1" height="1"/><rect x="409.25" y="108.50" width="1" height="1"/><rect x="413.00" y="108.50" width="1" height="1"/><rect x="416.75" y="108.50" width="1" height="1"/><rect x="420.50" y="108.50" width="1" height="1"/><rect x="424.25" y="108.50" width="1" height="1"/><rect x="428.00" y="108.50" width="1" height="1"/><rect x="431.75" y="108.50" width="1" height="1"/><rect x="435.50" y="108.50" width="1" height="1"/><rect x="439.25" y="108.50" width="1" height="1"/><rect x="443.00" y="108.50" width="1" height="1"/><rect x="446.75" y="108.50" width="1" height="1"/><rect x="450.50" y="108.50" width="1" height="1"/><rect x="454.25" y="108.50" width="1" height="1"/><rect x="458.00" y="108.50" width="1" height="1"/><rect x="461.75" y="108.50" width="1" height="1"/><rect x="465.50" y="108.50" width="1" height="1"/><rect x="469.25" y="108.50" width="1" height="1"/><rect x="473.00" y="108.50" width="1" height="1"/><rect x="476.75" y="108.50" width="1" height="1"/><rect x="480.50" y="108.50" width="1" height="1"/><rect x="484.25" y="108.50" width="1" height="1"/><rect x="488.00" y="108.50" width="1" height="1"/><rect x="491.75" y="108.50" width="1" height="1"/><rect x="495.50" y="108.50" width="1" height="1"/><rect x="499.25" y="108.50" width="1" height="1"/><rect x="503.00" y="108.50" width="1" height="1"/><rect x="506.75" y="108.50" width="1" height="1"/><rect x="510.50" y="108.50" width="1" height="1"/><rect x="514.25" y="108.50" width="1" height="1"/><rect x="518.00" y="108.50" width="1" height="1"/><rect x="521.75" y="108.50" width="1" height="1"/><rect x="525.50" y="108.50" width="1" height="1"/><rect x="529.25" y="108.50" width="1" height="1"/><rect x="533.00" y="108.50" width="1" height="1"/><rect x="536.75" y="108.50" width="1" height="1"/><rect x="540.50" y="108.50" width="1" height="1"/><rect x="544.25" y="108.50" width="1" height="1"/><rect x="548.00" y="108.50" width="1" height="1"/><rect x="551.75" y="108.50" width="1" height="1"/><rect x="555.50" y="108.50" width="1" height="1"/><rect x="559.25" y="108.50" width="1" height="1"/><rect x="41.75" y="146.00" width="1" height="1"/><rect x="45.50" y="146.00" width="1" height="1"/><rect x="49.25" y="146.00" width="1" height="1"/><rect x="53.00" y="146.00" width="1" height="1"/><rect x="56.75" y="146.00" width="1" height="1"/><rect x="60.50" y="146.00" width="1" height="1"/><rect x="64.25" y="146.00" width="1" height="1"/><rect x="68.00" y="146.00" width="1" height="1"/><rect x="71.75" y="146.00" width="1" height="1"/><rect x="75.50" y="146.00" width="1" height="1"/><rect x="79.25" y="146.00" width="1" height="1"/><rect x="83.00" y="146.00" width="1" height="1"/><rect x="86.75" y="146.00" width="1" height="1"/><rect x="90.50" y="146.00" width="1" height="1"/><rect x="94.25" y="146.00" width="1" height="1"/><rect x="98.00" y="146.00" width="1" height="1"/><rect x="101.75" y="146.00" width="1" height="1"/><rect x="105.50" y="146.00" width="1" height="1"/><rect x="109.25" y="146.00" width="1" height="1"/><rect x="113.00" y="146.00" width="1" height="1"/><rect x="116.75" y="146.00" width="1" height="1"/><rect x="120.50" y="146.00" width="1" height="1"/><rect x="124.25" y="146.00" width="1" height="1"/><rect x="128.00" y="146.00" width="1" height="1"/><rect x="131.75" y="146.00" width="1" height="1"/><rect x="135.50" y="146.00" width="1" height="1"/><rect x="139.25" y="146.00" width="1" height="1"/><rect x="143.00" y="146.00" width="1" height="1"/><rect x="146.75" y="146.00" width="1" height="1"/><rect x="150.50" y="146.00" width="1" height="1"/><rect x="154.25" y="146.00" width="1" height="1"/><rect x="158.00" y="146.00" width="1" height="1"/><rect x="161.75" y="146.00" width="1" height="1"/><rect x="165.50" y="146.00" width="1" height="1"/><rect x="169.25" y="146.00" width="1" height="1"/><rect x="173.00" y="146.00" width="1" height="1"/><rect x="176.75" y="146.00" width="1" height="1"/><rect x="180.50" y="146.00" width="1" height="1"/><rect x="184.25" y="146.00" width="1" height="1"/><rect x="188.00" y="146.00" width="1" height="1"/><rect x="191.75" y="146.00" width="1" height="1"/><rect x="195.50" y="146.00" width="1" height="1"/><rect x="199.25" y="146.00" width="1" height="1"/><rect x="203.00" y="146.00" width="1" height="1"/><rect x="206.75" y="146.00" width="1" height="1"/><rect x="210.50" y="146.00" width="1" height="1"/><rect x="214.25" y="146.00" width="1" height="1"/><rect x="218.00" y="146.00" width="1" height="1"/><rect x="221.75" y="146.00" width="1" height="1"/><rect x="225.50" y="146.00" width="1" height="1"/><rect x="229.25" y="146.00" width="1" height="1"/><rect x="233.00" y="146.00" width="1" height="1"/><rect x="236.75" y="146.00" width="1" height="1"/><rect x="240.50" y="146.00" width="1" height="1"/><rect x="244.25" y="146.00" width="1" height="1"/><rect x="248.00" y="146.00" width="1" height="1"/><rect x="251.75" y="146.00" width="1" height="1"/><rect x="255.50" y="146.00" width="1" height="1"/><rect x="259.25" y="146.00" width="1" height="1"/><rect x="263.00" y="146.00" width="1" height="1"/><rect x="266.75" y="146.00" width="1" height="1"/><rect x="270.50" y="146.00" width="1" height="1"/><rect x="274.25" y="146.00" width="1" height="1"/><rect x="278.00" y="146.00" width="1" height="1"/><rect x="281.75" y="146.00" width="1" height="1"/><rect x="285.50" y="146.00" width="1" height="1"/><rect x="289.25" y="146.00" width="1" height="1"/><rect x="293.00" y="146.00" width="1" height="1"/><rect x="296.75" y="146.00" width="1" height="1"/><rect x="300.50" y="146.00" width="1" height="1"/><rect x="304.25" y="146.00" width="1" height="1"/><rect x="308.00" y="146.00" width="1" height="1"/><rect x="311.75" y="146.00" width="1" height="1"/><rect x="315.50" y="146.00" width="1" height="1"/><rect x="319.25" y="146.00" width="1" height="1"/><rect x="323.00" y="146.00" width="1" height="1"/><rect x="326.75" y="146.00" width="1" height="1"/><rect x="330.50" y="146.00" width="1" height="1"/><rect x="334.25" y="146.00" width="1" height="1"/><rect x="338.00" y="146.00" width="1" height="1"/><rect x="341.75" y="146.00" width="1" height="1"/><rect x="345.50" y="146.00" width="1" height="1"/><rect x="349.25" y="146.00" width="1" height="1"/><rect x="353.00" y="146.00" width="1" height="1"/><rect x="356.75" y="146.00" width="1" height="1"/><rect x="360.50" y="146.00" width="1" height="1"/><rect x="364.25" y="146.00" width="1" height="1"/><rect x="368.00" y="146.00" width="1" height="1"/><rect x="371.75" y="146.00" width="1" height="1"/><rect x="375.50" y="146.00" width="1" height="1"/><rect x="379.25" y="146.00" width="1" height="1"/><rect x="383.00" y="146.00" width="1" height="1"/><rect x="386.75" y="146.00" width="1" height="1"/><rect x="390.50" y="146.00" width="1" height="1"/><rect x="394.25" y="146.00" width="1" height="1"/><rect x="398.00" y="146.00" width="1" height="1"/><rect x="401.75" y="146.00" width="1" height="1"/><rect x="405.50" y="146.00" width="1" height="1"/><rect x="409.25" y="146.00" width="1" height="1"/><rect x="413.00" y="146.00" width="1" height="1"/><rect x="416.75" y="146.00" width="1" height="1"/><rect x="420.50" y="146.00" width="1" height="1"/><rect x="424.25" y="146.00" width="1" height="1"/><rect x="428.00" y="146.00" width="1" height="1"/><rect x="431.75" y="146.00" width="1" height="1"/><rect x="435.50" y="146.00" width="1" height="1"/><rect x="439.25" y="146.00" width="1" height="1"/><rect x="443.00" y="146.00" width="1" height="1"/><rect x="446.75" y="146.00" width="1" height="1"/><rect x="450.50" y="146.00" width="1" height="1"/><rect x="454.25" y="146.00" width="1" height="1"/><rect x="458.00" y="146.00" width="1" height="1"/><rect x="461.75" y="146.00" width="1" height="1"/><rect x="465.50" y="146.00" width="1" height="1"/><rect x="469.25" y="146.00" width="1" height="1"/><rect x="473.00" y="146.00" width="1" height="1"/><rect x="476.75" y="146.00" width="1" height="1"/><rect x="480.50" y="146.00" width="1" height="1"/><rect x="484.25" y="146.00" width="1" height="1"/><rect x="488.00" y="146.00" width="1" height="1"/><rect x="491.75" y="146.00" width="1" height="1"/><rect x="495.50" y="146.00" width="1" height="1"/><rect x="499.25" y="146.00" width="1" height="1"/><rect x="503.00" y="146.00" width="1" height="1"/><rect x="506.75" y="146.00" width="1" height="1"/><rect x="510.50" y="146.00" width="1" height="1"/><rect x="514.25" y="146.00" width="1" height="1"/><rect x="518.00" y="146.00" width="1" height="1"/><rect x="521.75" y="146.00" width="1" height="1"/><rect x="525.50" y="146.00" width="1" height="1"/><rect x="529.25" y="146.00" width="1" height="1"/><rect x="533.00" y="146.00" width="1" height="1"/><rect x="536.75" y="146.00" width="1" height="1"/><rect x="540.50" y="146.00" width="1" height="1"/><rect x="544.25" y="146.00" width="1" height="1"/><rect x="548.00" y="146.00" width="1" height="1"/><rect x="551.75" y="146.00" width="1" height="1"/><rect x="555.50" y="146.00" width="1" height="1"/><rect x="559.25" y="146.00" width="1" height="1"/><rect x="41.75" y="183.50" width="1" height="1"/><rect x="45.50" y="183.50" width="1" height="1"/><rect x="49.25" y="183.50" width="1" height="1"/><rect x="53.00" y="183.50" width="1" height="1"/><rect x="56.75" y="183.50" width="1" height="1"/><rect x="60.50" y="183.50" width="1" height="1"/><rect x="64.25" y="183.50" width="1" height="1"/><rect x="68.00" y="183.50" width="1" height="1"/><rect x="71.75" y="183.50" width="1" height="1"/><rect x="75.50" y="183.50" width="1" height="1"/><rect x="79.25" y="183.50" width="1" height="1"/><rect x="83.00" y="183.50" width="1" height="1"/><rect x="86.75" y="183.50" width="1" height="1"/><rect x="90.50" y="183.50" width="1" height="1"/><rect x="94.25" y="183.50" width="1" height="1"/><rect x="98.00" y="183.50" width="1" height="1"/><rect x="101.75" y="183.50" width="1" height="1"/><rect x="105.50" y="183.50" width="1" height="1"/><rect x="109.25" y="183.50" width="1" height="1"/><rect x="113.00" y="183.50" width="1" height="1"/><rect x="116.75" y="183.50" width="1" height="1"/><rect x="120.50" y="183.50" width="1" height="1"/><rect x="124.25" y="183.50" width="1" height="1"/><rect x="128.00" y="183.50" width="1" height="1"/><rect x="131.75" y="183.50" width="1" height="1"/><rect x="135.50" y="183.50" width="1" height="1"/><rect x="139.25" y="183.50" width="1" height="1"/><rect x="143.00" y="183.50" width="1" height="1"/><rect x="146.75" y="183.50" width="1" height="1"/><rect x="150.50" y="183.50" width="1" height="1"/><rect x="154.25" y="183.50" width="1" height="1"/><rect x="158.00" y="183.50" width="1" height="1"/><rect x="161.75" y="183.50" width="1" height="1"/><rect x="165.50" y="183.50" width="1" height="1"/><rect x="169.25" y="183.50" width="1" height="1"/><rect x="173.00" y="183.50" width="1" height="1"/><rect x="176.75" y="183.50" width="1" height="1"/><rect x="180.50" y="183.50" width="1" height="1"/><rect x="184.25" y="183.50" width="1" height="1"/><rect x="188.00" y="183.50" width="1" height="1"/><rect x="191.75" y="183.50" width="1" height="1"/><rect x="195.50" y="183.50" width="1" height="1"/><rect x="199.25" y="183.50" width="1" height="1"/><rect x="203.00" y="183.50" width="1" height="1"/><rect x="206.75" y="183.50" width="1" height="1"/><rect x="210.50" y="183.50" width="1" height="1"/><rect x="214.25" y="183.50" width="1" height="1"/><rect x="218.00" y="183.50" width="1" height="1"/><rect x="221.75" y="183.50" width="1" height="1"/><rect x="225.50" y="183.50" width="1" height="1"/><rect x="229.25" y="183.50" width="1" height="1"/><rect x="233.00" y="183.50" width="1" height="1"/><rect x="236.75" y="183.50" width="1" height="1"/><rect x="240.50" y="183.50" width="1" height="1"/><rect x="244.25" y="183.50" width="1" height="1"/><rect x="248.00" y="183.50" width="1" height="1"/><rect x="251.75" y="183.50" width="1" height="1"/><rect x="255.50" y="183.50" width="1" height="1"/><rect x="259.25" y="183.50" width="1" height="1"/><rect x="263.00" y="183.50" width="1" height="1"/><rect x="266.75" y="183.50" width="1" height="1"/><rect x="270.50" y="183.50" width="1" height="1"/><rect x="274.25" y="183.50" width="1" height="1"/><rect x="278.00" y="183.50" width="1" height="1"/><rect x="281.75" y="183.50" width="1" height="1"/><rect x="285.50" y="183.50" width="1" height="1"/><rect x="289.25" y="183.50" width="1" height="1"/><rect x="293.00" y="183.50" width="1" height="1"/><rect x="296.75" y="183.50" width="1" height="1"/><rect x="300.50" y="183.50" width="1" height="1"/><rect x="304.25" y="183.50" width="1" height="1"/><rect x="308.00" y="183.50" width="1" height="1"/><rect x="311.75" y="183.50" width="1" height="1"/><rect x="315.50" y="183.50" width="1" height="1"/><rect x="319.25" y="183.50" width="1" height="1"/><rect x="323.00" y="183.50" width="1" height="1"/><rect x="326.75" y="183.50" width="1" height="1"/><rect x="330.50" y="183.50" width="1" height="1"/><rect x="334.25" y="183.50" width="1" height="1"/><rect x="338.00" y="183.50" width="1" height="1"/><rect x="341.75" y="183.50" width="1" height="1"/><rect x="345.50" y="183.50" width="1" height="1"/><rect x="349.25" y="183.50" width="1" height="1"/><rect x="353.00" y="183.50" width="1" height="1"/><rect x="356.75" y="183.50" width="1" height="1"/><rect x="360.50" y="183.50" width="1" height="1"/><rect x="364.25" y="183.50" width="1" height="1"/><rect x="368.00" y="183.50" width="1" height="1"/><rect x="371.75" y="183.50" width="1" height="1"/><rect x="375.50" y="183.50" width="1" height="1"/><rect x="379.25" y="183.50" width="1" height="1"/><rect x="383.00" y="183.50" width="1" height="1"/><rect x="386.75" y="183.50" width="1" height="1"/><rect x="390.50" y="183.50" width="1" height="1"/><rect x="394.25" y="183.50" width="1" height="1"/><rect x="398.00" y="183.50" width="1" height="1"/><rect x="401.75" y="183.50" width="1" height="1"/><rect x="405.50" y="183.50" width="1" height="1"/><rect x="409.25" y="183.50" width="1" height="1"/><rect x="413.00" y="183.50" width="1" height="1"/><rect x="416.75" y="183.50" width="1" height="1"/><rect x="420.50" y="183.50" width="1" height="1"/><rect x="424.25" y="183.50" width="1" height="1"/><rect x="428.00" y="183.50" width="1" height="1"/><rect x="431.75" y="183.50" width="1" height="1"/><rect x="435.50" y="183.50" width="1" height="1"/><rect x="439.25" y="183.50" width="1" height="1"/><rect x="443.00" y="183.50" width="1" height="1"/><rect x="446.75" y="183.50" width="1" height="1"/><rect x="450.50" y="183.50" width="1" height="1"/><rect x="454.25" y="183.50" width="1" height="1"/><rect x="458.00" y="183.50" width="1" height="1"/><rect x="461.75" y="183.50" width="1" height="1"/><rect x="465.50" y="183.50" width="1" height="1"/><rect x="469.25" y="183.50" width="1" height="1"/><rect x="473.00" y="183.50" width="1" height="1"/><rect x="476.75" y="183.50" width="1" height="1"/><rect x="480.50" y="183.50" width="1" height="1"/><rect x="484.25" y="183.50" width="1" height="1"/><rect x="488.00" y="183.50" width="1" height="1"/><rect x="491.75" y="183.50" width="1" height="1"/><rect x="495.50" y="183.50" width="1" height="1"/><rect x="499.25" y="183.50" width="1" height="1"/><rect x="503.00" y="183.50" width="1" height="1"/><rect x="506.75" y="183.50" width="1" height="1"/><rect x="510.50" y="183.50" width="1" height="1"/><rect x="514.25" y="183.50" width="1" height="1"/><rect x="518.00" y="183.50" width="1" height="1"/><rect x="521.75" y="183.50" width="1" height="1"/><rect x="525.50" y="183.50" width="1" height="1"/><rect x="529.25" y="183.50" width="1" height="1"/><rect x="533.00" y="183.50" width="1" height="1"/><rect x="536.75" y="183.50" width="1" height="1"/><rect x="540.50" y="183.50" width="1" height="1"/><rect x="544.25" y="183.50" width="1" height="1"/><rect x="548.00" y="183.50" width="1" height="1"/><rect x="551.75" y="183.50" width="1" height="1"/><rect x="555.50" y="183.50" width="1" height="1"/><rect x="559.25" y="183.50" width="1" height="1"/><rect x="41.75" y="221.00" width="1" height="1"/><rect x="45.50" y="221.00" width="1" height="1"/><rect x="49.25" y="221.00" width="1" height="1"/><rect x="53.00" y="221.00" width="1" height="1"/><rect x="56.75" y="221.00" width="1" height="1"/><rect x="60.50" y="221.00" width="1" height="1"/><rect x="64.25" y="221.00" width="1" height="1"/><rect x="68.00" y="221.00" width="1" height="1"/><rect x="71.75" y="221.00" width="1" height="1"/><rect x="75.50" y="221.00" width="1" height="1"/><rect x="79.25" y="221.00" width="1" height="1"/><rect x="83.00" y="221.00" width="1" height="1"/><rect x="86.75" y="221.00" width="1" height="1"/><rect x="90.50" y="221.00" width="1" height="1"/><rect x="94.25" y="221.00" width="1" height="1"/><rect x="98.00" y="221.00" width="1" height="1"/><rect x="101.75" y="221.00" width="1" height="1"/><rect x="105.50" y="221.00" width="1" height="1"/><rect x="109.25" y="221.00" width="1" height="1"/><rect x="113.00" y="221.00" width="1" height="1"/><rect x="116.75" y="221.00" width="1" height="1"/><rect x="120.50" y="221.00" width="1" height="1"/><rect x="124.25" y="221.00" width="1" height="1"/><rect x="128.00" y="221.00" width="1" height="1"/><rect x="131.75" y="221.00" width="1" height="1"/><rect x="135.50" y="221.00" width="1" height="1"/><rect x="139.25" y="221.00" width="1" height="1"/><rect x="143.00" y="221.00" width="1" height="1"/><rect x="146.75" y="221.00" width="1" height="1"/><rect x="150.50" y="221.00" width="1" height="1"/><rect x="154.25" y="221.00" width="1" height="1"/><rect x="158.00" y="221.00" width="1" height="1"/><rect x="161.75" y="221.00" width="1" height="1"/><rect x="165.50" y="221.00" width="1" height="1"/><rect x="169.25" y="221.00" width="1" height="1"/><rect x="173.00" y="221.00" width="1" height="1"/><rect x="176.75" y="221.00" width="1" height="1"/><rect x="180.50" y="221.00" width="1" height="1"/><rect x="184.25" y="221.00" width="1" height="1"/><rect x="188.00" y="221.00" width="1" height="1"/><rect x="191.75" y="221.00" width="1" height="1"/><rect x="195.50" y="221.00" width="1" height="1"/><rect x="199.25" y="221.00" width="1" height="1"/><rect x="203.00" y="221.00" width="1" height="1"/><rect x="206.75" y="221.00" width="1" height="1"/><rect x="210.50" y="221.00" width="1" height="1"/><rect x="214.25" y="221.00" width="1" height="1"/><rect x="218.00" y="221.00" width="1" height="1"/><rect x="221.75" y="221.00" width="1" height="1"/><rect x="225.50" y="221.00" width="1" height="1"/><rect x="229.25" y="221.00" width="1" height="1"/><rect x="233.00" y="221.00" width="1" height="1"/><rect x="236.75" y="221.00" width="1" height="1"/><rect x="240.50" y="221.00" width="1" height="1"/><rect x="244.25" y="221.00" width="1" height="1"/><rect x="248.00" y="221.00" width="1" height="1"/><rect x="251.75" y="221.00" width="1" height="1"/><rect x="255.50" y="221.00" width="1" height="1"/><rect x="259.25" y="221.00" width="1" height="1"/><rect x="263.00" y="221.00" width="1" height="1"/><rect x="266.75" y="221.00" width="1" height="1"/><rect x="270.50" y="221.00" width="1" height="1"/><rect x="274.25" y="221.00" width="1" height="1"/><rect x="278.00" y="221.00" width="1" height="1"/><rect x="281.75" y="221.00" width="1" height="1"/><rect x="285.50" y="221.00" width="1" height="1"/><rect x="289.25" y="221.00" width="1" height="1"/><rect x="293.00" y="221.00" width="1" height="1"/><rect x="296.75" y="221.00" width="1" height="1"/><rect x="300.50" y="221.00" width="1" height="1"/><rect x="304.25" y="221.00" width="1" height="1"/><rect x="308.00" y="221.00" width="1" height="1"/><rect x="311.75" y="221.00" width="1" height="1"/><rect x="315.50" y="221.00" width="1" height="1"/><rect x="319.25" y="221.00" width="1" height="1"/><rect x="323.00" y="221.00" width="1" height="1"/><rect x="326.75" y="221.00" width="1" height="1"/><rect x="330.50" y="221.00" width="1" height="1"/><rect x="334.25" y="221.00" width="1" height="1"/><rect x="338.00" y="221.00" width="1" height="1"/><rect x="341.75" y="221.00" width="1" height="1"/><rect x="345.50" y="221.00" width="1" height="1"/><rect x="349.25" y="221.00" width="1" height="1"/><rect x="353.00" y="221.00" width="1" height="1"/><rect x="356.75" y="221.00" width="1" height="1"/><rect x="360.50" y="221.00" width="1" height="1"/><rect x="364.25" y="221.00" width="1" height="1"/><rect x="368.00" y="221.00" width="1" height="1"/><rect x="371.75" y="221.00" width="1" height="1"/><rect x="375.50" y="221.00" width="1" height="1"/><rect x="379.25" y="221.00" width="1" height="1"/><rect x="383.00" y="221.00" width="1" height="1"/><rect x="386.75" y="221.00" width="1" height="1"/><rect x="390.50" y="221.00" width="1" height="1"/><rect x="394.25" y="221.00" width="1" height="1"/><rect x="398.00" y="221.00" width="1" height="1"/><rect x="401.75" y="221.00" width="1" height="1"/><rect x="405.50" y="221.00" width="1" height="1"/><rect x="409.25" y="221.00" width="1" height="1"/><rect x="413.00" y="221.00" width="1" height="1"/><rect x="416.75" y="221.00" width="1" height="1"/><rect x="420.50" y="221.00" width="1" height="1"/><rect x="424.25" y="221.00" width="1" height="1"/><rect x="428.00" y="221.00" width="1" height="1"/><rect x="431.75" y="221.00" width="1" height="1"/><rect x="435.50" y="221.00" width="1" height="1"/><rect x="439.25" y="221.00" width="1" height="1"/><rect x="443.00" y="221.00" width="1" height="1"/><rect x="446.75" y="221.00" width="1" height="1"/><rect x="450.50" y="221.00" width="1" height="1"/><rect x="454.25" y="221.00" width="1" height="1"/><rect x="458.00" y="221.00" width="1" height="1"/><rect x="461.75" y="221.00" width="1" height="1"/><rect x="465.50" y="221.00" width="1" height="1"/><rect x="469.25" y="221.00" width="1" height="1"/><rect x="473.00" y="221.00" width="1" height="1"/><rect x="476.75" y="221.00" width="1" height="1"/><rect x="480.50" y="221.00" width="1" height="1"/><rect x="484.25" y="221.00" width="1" height="1"/><rect x="488.00" y="221.00" width="1" height="1"/><rect x="491.75" y="221.00" width="1" height="1"/><rect x="495.50" y="221.00" width="1" height="1"/><rect x="499.25" y="221.00" width="1" height="1"/><rect x="503.00" y="221.00" width="1" height="1"/><rect x="506.75" y="221.00" width="1" height="1"/><rect x="510.50" y="221.00" width="1" height="1"/><rect x="514.25" y="221.00" width="1" height="1"/><rect x="518.00" y="221.00" width="1" height="1"/><rect x="521.75" y="221.00" width="1" height="1"/><rect x="525.50" y="221.00" width="1" height="1"/><rect x="529.25" y="221.00" width="1" height="1"/><rect x="533.00" y="221.00" width="1" height="1"/><rect x="536.75" y="221.00" width="1" height="1"/><rect x="540.50" y="221.00" width="1" height="1"/><rect x="544.25" y="221.00" width="1" height="1"/><rect x="548.00" y="221.00" width="1" height="1"/><rect x="551.75" y="221.00" width="1" height="1"/><rect x="555.50" y="221.00" width="1" height="1"/><rect x="559.25" y="221.00" width="1" height="1"/><rect x="41.75" y="258.50" width="1" height="1"/><rect x="45.50" y="258.50" width="1" height="1"/><rect x="49.25" y="258.50" width="1" height="1"/><rect x="53.00" y="258.50" width="1" height="1"/><rect x="56.75" y="258.50" width="1" height="1"/><rect x="60.50" y="258.50" width="1" height="1"/><rect x="64.25" y="258.50" width="1" height="1"/><rect x="68.00" y="258.50" width="1" height="1"/><rect x="71.75" y="258.50" width="1" height="1"/><rect x="75.50" y="258.50" width="1" height="1"/><rect x="79.25" y="258.50" width="1" height="1"/><rect x="83.00" y="258.50" width="1" height="1"/><rect x="86.75" y="258.50" width="1" height="1"/><rect x="90.50" y="258.50" width="1" height="1"/><rect x="94.25" y="258.50" width="1" height="1"/><rect x="98.00" y="258.50" width="1" height="1"/><rect x="101.75" y="258.50" width="1" height="1"/><rect x="105.50" y="258.50" width="1" height="1"/><rect x="109.25" y="258.50" width="1" height="1"/><rect x="113.00" y="258.50" width="1" height="1"/><rect x="116.75" y="258.50" width="1" height="1"/><rect x="120.50" y="258.50" width="1" height="1"/><rect x="124.25" y="258.50" width="1" height="1"/><rect x="128.00" y="258.50" width="1" height="1"/><rect x="131.75" y="258.50" width="1" height="1"/><rect x="135.50" y="258.50" width="1" height="1"/><rect x="139.25" y="258.50" width="1" height="1"/><rect x="143.00" y="258.50" width="1" height="1"/><rect x="146.75" y="258.50" width="1" height="1"/><rect x="150.50" y="258.50" width="1" height="1"/><rect x="154.25" y="258.50" width="1" height="1"/><rect x="158.00" y="258.50" width="1" height="1"/><rect x="161.75" y="258.50" width="1" height="1"/><rect x="165.50" y="258.50" width="1" height="1"/><rect x="169.25" y="258.50" width="1" height="1"/><rect x="173.00" y="258.50" width="1" height="1"/><rect x="176.75" y="258.50" width="1" height="1"/><rect x="180.50" y="258.50" width="1" height="1"/><rect x="184.25" y="258.50" width="1" height="1"/><rect x="188.00" y="258.50" width="1" height="1"/><rect x="191.75" y="258.50" width="1" height="1"/><rect x="195.50" y="258.50" width="1" height="1"/><rect x="199.25" y="258.50" width="1" height="1"/><rect x="203.00" y="258.50" width="1" height="1"/><rect x="206.75" y="258.50" width="1" height="1"/><rect x="210.50" y="258.50" width="1" height="1"/><rect x="214.25" y="258.50" width="1" height="1"/><rect x="218.00" y="258.50" width="1" height="1"/><rect x="221.75" y="258.50" width="1" height="1"/><rect x="225.50" y="258.50" width="1" height="1"/><rect x="229.25" y="258.50" width="1" height="1"/><rect x="233.00" y="258.50" width="1" height="1"/><rect x="236.75" y="258.50" width="1" height="1"/><rect x="240.50" y="258.50" width="1" height="1"/><rect x="244.25" y="258.50" width="1" height="1"/><rect x="248.00" y="258.50" width="1" height="1"/><rect x="251.75" y="258.50" width="1" height="1"/><rect x="255.50" y="258.50" width="1" height="1"/><rect x="259.25" y="258.50" width="1" height="1"/><rect x="263.00" y="258.50" width="1" height="1"/><rect x="266.75" y="258.50" width="1" height="1"/><rect x="270.50" y="258.50" width="1" height="1"/><rect x="274.25" y="258.50" width="1" height="1"/><rect x="278.00" y="258.50" width="1" height="1"/><rect x="281.75" y="258.50" width="1" height="1"/><rect x="285.50" y="258.50" width="1" height="1"/><rect x="289.25" y="258.50" width="1" height="1"/><rect x="293.00" y="258.50" width="1" height="1"/><rect x="296.75" y="258.50" width="1" height="1"/><rect x="300.50" y="258.50" width="1" height="1"/><rect x="304.25" y="258.50" width="1" height="1"/><rect x="308.00" y="258.50" width="1" height="1"/><rect x="311.75" y="258.50" width="1" height="1"/><rect x="315.50" y="258.50" width="1" height="1"/><rect x="319.25" y="258.50" width="1" height="1"/><rect x="323.00" y="258.50" width="1" height="1"/><rect x="326.75" y="258.50" width="1" height="1"/><rect x="330.50" y="258.50" width="1" height="1"/><rect x="334.25" y="258.50" width="1" height="1"/><rect x="338.00" y="258.50" width="1" height="1"/><rect x="341.75" y="258.50" width="1" height="1"/><rect x="345.50" y="258.50" width="1" height="1"/><rect x="349.25" y="258.50" width="1" height="1"/><rect x="353.00" y="258.50" width="1" height="1"/><rect x="356.75" y="258.50" width="1" height="1"/><rect x="360.50" y="258.50" width="1" height="1"/><rect x="364.25" y="258.50" width="1" height="1"/><rect x="368.00" y="258.50" width="1" height="1"/><rect x="371.75" y="258.50" width="1" height="1"/><rect x="375.50" y="258.50" width="1" height="1"/><rect x="379.25" y="258.50" width="1" height="1"/><rect x="383.00" y="258.50" width="1" height="1"/><rect x="386.75" y="258.50" width="1" height="1"/><rect x="390.50" y="258.50" width="1" height="1"/><rect x="394.25" y="258.50" width="1" height="1"/><rect x="398.00" y="258.50" width="1" height="1"/><rect x="401.75" y="258.50" width="1" height="1"/><rect x="405.50" y="258.50" width="1" height="1"/><rect x="409.25" y="258.50" width="1" height="1"/><rect x="413.00" y="258.50" width="1" height="1"/><rect x="416.75" y="258.50" width="1" height="1"/><rect x="420.50" y="258.50" width="1" height="1"/><rect x="424.25" y="258.50" width="1" height="1"/><rect x="428.00" y="258.50" width="1" height="1"/><rect x="431.75" y="258.50" width="1" height="1"/><rect x="435.50" y="258.50" width="1" height="1"/><rect x="439.25" y="258.50" width="1" height="1"/><rect x="443.00" y="258.50" width="1" height="1"/><rect x="446.75" y="258.50" width="1" height="1"/><rect x="450.50" y="258.50" width="1" height="1"/><rect x="454.25" y="258.50" width="1" height="1"/><rect x="458.00" y="258.50" width="1" height="1"/><rect x="461.75" y="258.50" width="1" height="1"/><rect x="465.50" y="258.50" width="1" height="1"/><rect x="469.25" y="258.50" width="1" height="1"/><rect x="473.00" y="258.50" width="1" height="1"/><rect x="476.75" y="258.50" width="1" height="1"/><rect x="480.50" y="258.50" width="1" height="1"/><rect x="484.25" y="258.50" width="1" height="1"/><rect x="488.00" y="258.50" width="1" height="1"/><rect x="491.75" y="258.50" width="1" height="1"/><rect x="495.50" y="258.50" width="1" height="1"/><rect x="499.25" y="258.50" width="1" height="1"/><rect x="503.00" y="258.50" width="1" height="1"/><rect x="506.75" y="258.50" width="1" height="1"/><rect x="510.50" y="258.50" width="1" height="1"/><rect x="514.25" y="258.50" width="1" height="1"/><rect x="518.00" y="258.50" width="1" height="1"/><rect x="521.75" y="258.50" width="1" height="1"/><rect x="525.50" y="258.50" width="1" height="1"/><rect x="529.25" y="258.50" width="1" height="1"/><rect x="533.00" y="258.50" width="1" height="1"/><rect x="536.75" y="258.50" width="1" height="1"/><rect x="540.50" y="258.50" width="1" height="1"/><rect x="544.25" y="258.50" width="1" height="1"/><rect x="548.00" y="258.50" width="1" height="1"/><rect x="551.75" y="258.50" width="1" height="1"/><rect x="555.50" y="258.50" width="1" height="1"/><rect x="559.25" y="258.50" width="1" height="1"/><rect x="41.75" y="296.00" width="1" height="1"/><rect x="45.50" y="296.00" width="1" height="1"/><rect x="49.25" y="296.00" width="1" height="1"/><rect x="53.00" y="296.00" width="1" height="1"/><rect x="56.75" y="296.00" width="1" height="1"/><rect x="60.50" y="296.00" width="1" height="1"/><rect x="64.25" y="296.00" width="1" height="1"/><rect x="68.00" y="296.00" width="1" height="1"/><rect x="71.75" y="296.00" width="1" height="1"/><rect x="75.50" y="296.00" width="1" height="1"/><rect x="79.25" y="296.00" width="1" height="1"/><rect x="83.00" y="296.00" width="1" height="1"/><rect x="86.75" y="296.00" width="1" height="1"/><rect x="90.50" y="296.00" width="1" height="1"/><rect x="94.25" y="296.00" width="1" height="1"/><rect x="98.00" y="296.00" width="1" height="1"/><rect x="101.75" y="296.00" width="1" height="1"/><rect x="105.50" y="296.00" width="1" height="1"/><rect x="109.25" y="296.00" width="1" height="1"/><rect x="113.00" y="296.00" width="1" height="1"/><rect x="116.75" y="296.00" width="1" height="1"/><rect x="120.50" y="296.00" width="1" height="1"/><rect x="124.25" y="296.00" width="1" height="1"/><rect x="128.00" y="296.00" width="1" height="1"/><rect x="131.75" y="296.00" width="1" height="1"/><rect x="135.50" y="296.00" width="1" height="1"/><rect x="139.25" y="296.00" width="1" height="1"/><rect x="143.00" y="296.00" width="1" height="1"/><rect x="146.75" y="296.00" width="1" height="1"/><rect x="150.50" y="296.00" width="1" height="1"/><rect x="154.25" y="296.00" width="1" height="1"/><rect x="158.00" y="296.00" width="1" height="1"/><rect x="161.75" y="296.00" width="1" height="1"/><rect x="165.50" y="296.00" width="1" height="1"/><rect x="169.25" y="296.00" width="1" height="1"/><rect x="173.00" y="296.00" width="1" height="1"/><rect x="176.75" y="296.00" width="1" height="1"/><rect x="180.50" y="296.00" width="1" height="1"/><rect x="184.25" y="296.00" width="1" height="1"/><rect x="188.00" y="296.00" width="1" height="1"/><rect x="191.75" y="296.00" width="1" height="1"/><rect x="195.50" y="296.00" width="1" height="1"/><rect x="199.25" y="296.00" width="1" height="1"/><rect x="203.00" y="296.00" width="1" height="1"/><rect x="206.75" y="296.00" width="1" height="1"/><rect x="210.50" y="296.00" width="1" height="1"/><rect x="214.25" y="296.00" width="1" height="1"/><rect x="218.00" y="296.00" width="1" height="1"/><rect x="221.75" y="296.00" width="1" height="1"/><rect x="225.50" y="296.00" width="1" height="1"/><rect x="229.25" y="296.00" width="1" height="1"/><rect x="233.00" y="296.00" width="1" height="1"/><rect x="236.75" y="296.00" width="1" height="1"/><rect x="240.50" y="296.00" width="1" height="1"/><rect x="244.25" y="296.00" width="1" height="1"/><rect x="248.00" y="296.00" width="1" height="1"/><rect x="251.75" y="296.00" width="1" height="1"/><rect x="255.50" y="296.00" width="1" height="1"/><rect x="259.25" y="296.00" width="1" height="1"/><rect x="263.00" y="296.00" width="1" height="1"/><rect x="266.75" y="296.00" width="1" height="1"/><rect x="270.50" y="296.00" width="1" height="1"/><rect x="274.25" y="296.00" width="1" height="1"/><rect x="278.00" y="296.00" width="1" height="1"/><rect x="281.75" y="296.00" width="1" height="1"/><rect x="285.50" y="296.00" width="1" height="1"/><rect x="289.25" y="296.00" width="1" height="1"/><rect x="293.00" y="296.00" width="1" height="1"/><rect x="296.75" y="296.00" width="1" height="1"/><rect x="300.50" y="296.00" width="1" height="1"/><rect x="304.25" y="296.00" width="1" height="1"/><rect x="308.00" y="296.00" width="1" height="1"/><rect x="311.75" y="296.00" width="1" height="1"/><rect x="315.50" y="296.00" width="1" height="1"/><rect x="319.25" y="296.00" width="1" height="1"/><rect x="323.00" y="296.00" width="1" height="1"/><rect x="326.75" y="296.00" width="1" height="1"/><rect x="330.50" y="296.00" width="1" height="1"/><rect x="334.25" y="296.00" width="1" height="1"/><rect x="338.00" y="296.00" width="1" height="1"/><rect x="341.75" y="296.00" width="1" height="1"/><rect x="345.50" y="296.00" width="1" height="1"/><rect x="349.25" y="296.00" width="1" height="1"/><rect x="353.00" y="296.00" width="1" height="1"/><rect x="356.75" y="296.00" width="1" height="1"/><rect x="360.50" y="296.00" width="1" height="1"/><rect x="364.25" y="296.00" width="1" height="1"/><rect x="368.00" y="296.00" width="1" height="1"/><rect x="371.75" y="296.00" width="1" height="1"/><rect x="375.50" y="296.00" width="1" height="1"/><rect x="379.25" y="296.00" width="1" height="1"/><rect x="383.00" y="296.00" width="1" height="1"/><rect x="386.75" y="296.00" width="1" height="1"/><rect x="390.50" y="296.00" width="1" height="1"/><rect x="394.25" y="296.00" width="1" height="1"/><rect x="398.00" y="296.00" width="1" height="1"/><rect x="401.75" y="296.00" width="1" height="1"/><rect x="405.50" y="296.00" width="1" height="1"/><rect x="409.25" y="296.00" width="1" height="1"/><rect x="413.00" y="296.00" width="1" height="1"/><rect x="416.75" y="296.00" width="1" height="1"/><rect x="420.50" y="296.00" width="1" height="1"/><rect x="424.25" y="296.00" width="1" height="1"/><rect x="428.00" y="296.00" width="1" height="1"/><rect x="431.75" y="296.00" width="1" height="1"/><rect x="435.50" y="296.00" width="1" height="1"/><rect x="439.25" y="296.00" width="1" height="1"/><rect x="443.00" y="296.00" width="1" height="1"/><rect x="446.75" y="296.00" width="1" height="1"/><rect x="450.50" y="296.00" width="1" height="1"/><rect x="454.25" y="296.00" width="1" height="1"/><rect x="458.00" y="296.00" width="1" height="1"/><rect x="461.75" y="296.00" width="1" height="1"/><rect x="465.50" y="296.00" width="1" height="1"/><rect x="469.25" y="296.00" width="1" height="1"/><rect x="473.00" y="296.00" width="1" height="1"/><rect x="476.75" y="296.00" width="1" height="1"/><rect x="480.50" y="296.00" width="1" height="1"/><rect x="484.25" y="296.00" width="1" height="1"/><rect x="488.00" y="296.00" width="1" height="1"/><rect x="491.75" y="296.00" width="1" height="1"/><rect x="495.50" y="296.00" width="1" height="1"/><rect x="499.25" y="296.00" width="1" height="1"/><rect x="503.00" y="296.00" width="1" height="1"/><rect x="506.75" y="296.00" width="1" height="1"/><rect x="510.50" y="296.00" width="1" height="1"/><rect x="514.25" y="296.00" width="1" height="1"/><rect x="518.00" y="296.00" width="1" height="1"/><rect x="521.75" y="296.00" width="1" height="1"/><rect x="525.50" y="296.00" width="1" height="1"/><rect x="529.25" y="296.00" width="1" height="1"/><rect x="533.00" y="296.00" width="1" height="1"/><rect x="536.75" y="296.00" width="1" height="1"/><rect x="540.50" y="296.00" width="1" height="1"/><rect x="544.25" y="296.00" width="1" height="1"/><rect x="548.00" y="296.00" width="1" height="1"/><rect x="551.75" y="296.00" width="1" height="1"/><rect x="555.50" y="296.00" width="1" height="1"/><rect x="559.25" y="296.00" width="1" height="1"/><rect x="41.75" y="333.50" width="1" height="1"/><rect x="45.50" y="333.50" width="1" height="1"/><rect x="49.25" y="333.50" width="1" height="1"/><rect x="53.00" y="333.50" width="1" height="1"/><rect x="56.75" y="333.50" width="1" height="1"/><rect x="60.50" y="333.50" width="1" height="1"/><rect x="64.25" y="333.50" width="1" height="1"/><rect x="68.00" y="333.50" width="1" height="1"/><rect x="71.75" y="333.50" width="1" height="1"/><rect x="75.50" y="333.50" width="1" height="1"/><rect x="79.25" y="333.50" width="1" height="1"/><rect x="83.00" y="333.50" width="1" height="1"/><rect x="86.75" y="333.50" width="1" height="1"/><rect x="90.50" y="333.50" width="1" height="1"/><rect x="94.25" y="333.50" width="1" height="1"/><rect x="98.00" y="333.50" width="1" height="1"/><rect x="101.75" y="333.50" width="1" height="1"/><rect x="105.50" y="333.50" width="1" height="1"/><rect x="109.25" y="333.50" width="1" height="1"/><rect x="113.00" y="333.50" width="1" height="1"/><rect x="116.75" y="333.50" width="1" height="1"/><rect x="120.50" y="333.50" width="1" height="1"/><rect x="124.25" y="333.50" width="1" height="1"/><rect x="128.00" y="333.50" width="1" height="1"/><rect x="131.75" y="333.50" width="1" height="1"/><rect x="135.50" y="333.50" width="1" height="1"/><rect x="139.25" y="333.50" width="1" height="1"/><rect x="143.00" y="333.50" width="1" height="1"/><rect x="146.75" y="333.50" width="1" height="1"/><rect x="150.50" y="333.50" width="1" height="1"/><rect x="154.25" y="333.50" width="1" height="1"/><rect x="158.00" y="333.50" width="1" height="1"/><rect x="161.75" y="333.50" width="1" height="1"/><rect x="165.50" y="333.50" width="1" height="1"/><rect x="169.25" y="333.50" width="1" height="1"/><rect x="173.00" y="333.50" width="1" height="1"/><rect x="176.75" y="333.50" width="1" height="1"/><rect x="180.50" y="333.50" width="1" height="1"/><rect x="184.25" y="333.50" width="1" height="1"/><rect x="188.00" y="333.50" width="1" height="1"/><rect x="191.75" y="333.50" width="1" height="1"/><rect x="195.50" y="333.50" width="1" height="1"/><rect x="199.25" y="333.50" width="1" height="1"/><rect x="203.00" y="333.50" width="1" height="1"/><rect x="206.75" y="333.50" width="1" height="1"/><rect x="210.50" y="333.50" width="1" height="1"/><rect x="214.25" y="333.50" width="1" height="1"/><rect x="218.00" y="333.50" width="1" height="1"/><rect x="221.75" y="333.50" width="1" height="1"/><rect x="225.50" y="333.50" width="1" height="1"/><rect x="229.25" y="333.50" width="1" height="1"/><rect x="233.00" y="333.50" width="1" height="1"/><rect x="236.75" y="333.50" width="1" height="1"/><rect x="240.50" y="333.50" width="1" height="1"/><rect x="244.25" y="333.50" width="1" height="1"/><rect x="248.00" y="333.50" width="1" height="1"/><rect x="251.75" y="333.50" width="1" height="1"/><rect x="255.50" y="333.50" width="1" height="1"/><rect x="259.25" y="333.50" width="1" height="1"/><rect x="263.00" y="333.50" width="1" height="1"/><rect x="266.75" y="333.50" width="1" height="1"/><rect x="270.50" y="333.50" width="1" height="1"/><rect x="274.25" y="333.50" width="1" height="1"/><rect x="278.00" y="333.50" width="1" height="1"/><rect x="281.75" y="333.50" width="1" height="1"/><rect x="285.50" y="333.50" width="1" height="1"/><rect x="289.25" y="333.50" width="1" height="1"/><rect x="293.00" y="333.50" width="1" height="1"/><rect x="296.75" y="333.50" width="1" height="1"/><rect x="300.50" y="333.50" width="1" height="1"/><rect x="304.25" y="333.50" width="1" height="1"/><rect x="308.00" y="333.50" width="1" height="1"/><rect x="311.75" y="333.50" width="1" height="1"/><rect x="315.50" y="333.50" width="1" height="1"/><rect x="319.25" y="333.50" width="1" height="1"/><rect x="323.00" y="333.50" width="1" height="1"/><rect x="326.75" y="333.50" width="1" height="1"/><rect x="330.50" y="333.50" width="1" height="1"/><rect x="334.25" y="333.50" width="1" height="1"/><rect x="338.00" y="333.50" width="1" height="1"/><rect x="341.75" y="333.50" width="1" height="1"/><rect x="345.50" y="333.50" width="1" height="1"/><rect x="349.25" y="333.50" width="1" height="1"/><rect x="353.00" y="333.50" width="1" height="1"/><rect x="356.75" y="333.50" width="1" height="1"/><rect x="360.50" y="333.50" width="1" height="1"/><rect x="364.25" y="333.50" width="1" height="1"/><rect x="368.00" y="333.50" width="1" height="1"/><rect x="371.75" y="333.50" width="1" height="1"/><rect x="375.50" y="333.50" width="1" height="1"/><rect x="379.25" y="333.50" width="1" height="1"/><rect x="383.00" y="333.50" width="1" height="1"/><rect x="386.75" y="333.50" width="1" height="1"/><rect x="390.50" y="333.50" width="1" height="1"/><rect x="394.25" y="333.50" width="1" height="1"/><rect x="398.00" y="333.50" width="1" height="1"/><rect x="401.75" y="333.50" width="1" height="1"/><rect x="405.50" y="333.50" width="1" height="1"/><rect x="409.25" y="333.50" width="1" height="1"/><rect x="413.00" y="333.50" width="1" height="1"/><rect x="416.75" y="333.50" width="1" height="1"/><rect x="420.50" y="333.50" width="1" height="1"/><rect x="424.25" y="333.50" width="1" height="1"/><rect x="428.00" y="333.50" width="1" height="1"/><rect x="431.75" y="333.50" width="1" height="1"/><rect x="435.50" y="333.50" width="1" height="1"/><rect x="439.25" y="333.50" width="1" height="1"/><rect x="443.00" y="333.50" width="1" height="1"/><rect x="446.75" y="333.50" width="1" height="1"/><rect x="450.50" y="333.50" width="1" height="1"/><rect x="454.25" y="333.50" width="1" height="1"/><rect x="458.00" y="333.50" width="1" height="1"/><rect x="461.75" y="333.50" width="1" height="1"/><rect x="465.50" y="333.50" width="1" height="1"/><rect x="469.25" y="333.50" width="1" height="1"/><rect x="473.00" y="333.50" width="1" height="1"/><rect x="476.75" y="333.50" width="1" height="1"/><rect x="480.50" y="333.50" width="1" height="1"/><rect x="484.25" y="333.50" width="1" height="1"/><rect x="488.00" y="333.50" width="1" height="1"/><rect x="491.75" y="333.50" width="1" height="1"/><rect x="495.50" y="333.50" width="1" height="1"/><rect x="499.25" y="333.50" width="1" height="1"/><rect x="503.00" y="333.50" width="1" height="1"/><rect x="506.75" y="333.50" width="1" height="1"/><rect x="510.50" y="333.50" width="1" height="1"/><rect x="514.25" y="333.50" width="1" height="1"/><rect x="518.00" y="333.50" width="1" height="1"/><rect x="521.75" y="333.50" width="1" height="1"/><rect x="525.50" y="333.50" width="1" height="1"/><rect x="529.25" y="333.50" width="1" height="1"/><rect x="533.00" y="333.50" width="1" height="1"/><rect x="536.75" y="333.50" width="1" height="1"/><rect x="540.50" y="333.50" width="1" height="1"/><rect x="544.25" y="333.50" width="1" height="1"/><rect x="548.00" y="333.50" width="1" height="1"/><rect x="551.75" y="333.50" width="1" height="1"/><rect x="555.50" y="333.50" width="1" height="1"/><rect x="559.25" y="333.50" width="1" height="1"/></g><g fill="#303030"><rect x="75.50" y="78.50" width="1" height="1"/><rect x="75.50" y="86.00" width="1" height="1"/><rect x="75.50" y="93.50" width="1" height="1"/><rect x="75.50" y="101.00" width="1" height="1"/><rect x="75.50" y="108.50" width="1" height="1"/><rect x="75.50" y="116.00" width="1" height="1"/><rect x="75.50" y="123.50" width="1" height="1"/><rect x="75.50" y="131.00" width="1" height="1"/><rect x="75.50" y="138.50" width="1" height="1"/><rect x="75.50" y="146.00" width="1" height="1"/><rect x="75.50" y="153.50" width="1" height="1"/><rect x="75.50" y="161.00" width="1" height="1"/><rect x="75.50" y="168.50" width="1" height="1"/><rect x="75.50" y="176.00" width="1" height="1"/><rect x="75.50" y="183.50" width="1" height="1"/><rect x="75.50" y="191.00" width="1" height="1"/><rect x="75.50" y="198.50" width="1" height="1"/><rect x="75.50" y="206.00" width="1" height="1"/><rect x="75.50" y="213.50" width="1" height="1"/><rect x="75.50" y="221.00" width="1" height="1"/><rect x="75.50" y="228.50" width="1" height="1"/><rect x="75.50" y="236.00" width="1" height="1"/><rect x="75.50" y="243.50" width="1" height="1"/><rect x="75.50" y="251.00" width="1" height="1"/><rect x="75.50" y="258.50" width="1" height="1"/><rect x="75.50" y="266.00" width="1" height="1"/><rect x="75.50" y="273.50" width="1" height="1"/><rect x="75.50" y="281.00" width="1" height="1"/><rect x="75.50" y="288.50" width="1" height="1"/><rect x="75.50" y="296.00" width="1" height="1"/><rect x="75.50" y="303.50" width="1" height="1"/><rect x="75.50" y="311.00" width="1" height="1"/><rect x="75.50" y="318.50" width="1" height="1"/><rect x="75.50" y="326.00" width="1" height="1"/><rect x="75.50" y="333.50" width="1" height="1"/><rect x="75.50" y="341.00" width="1" height="1"/><rect x="75.50" y="348.50" width="1" height="1"/><rect x="75.50" y="356.00" width="1" height="1"/><rect x="75.50" y="363.50" width="1" height="1"/><rect x="113.00" y="78.50" width="1" height="1"/><rect x="113.00" y="86.00" width="1" height="1"/><rect x="113.00" y="93.50" width="1" height="1"/><rect x="113.00" y="101.00" width="1" height="1"/><rect x="113.00" y="108.50" width="1" height="1"/><rect x="113.00" y="116.00" width="1" height="1"/><rect x="113.00" y="123.50" width="1" height="1"/><rect x="113.00" y="131.00" width="1" height="1"/><rect x="113.00" y="138.50" width="1" height="1"/><rect x="113.00" y="146.00" width="1" height="1"/><rect x="113.00" y="153.50" width="1" height="1"/><rect x="113.00" y="161.00" width="1" height="1"/><rect x="113.00" y="168.50" width="1" height="1"/><rect x="113.00" y="176.00" width="1" height="1"/><rect x="113.00" y="183.50" width="1" height="1"/><rect x="113.00" y="191.00" width="1" height="1"/><rect x="113.00" y="198.50" width="1" height="1"/><rect x="113.00" y="206.00" width="1" height="1"/><rect x="113.00" y="213.50" width="1" height="1"/><rect x="113.00" y="221.00" width="1" height="1"/><rect x="113.00" y="228.50" width="1" height="1"/><rect x="113.00" y="236.00" width="1" height="1"/><rect x="113.00" y="243.50" width="1" height="1"/><rect x="113.00" y="251.00" width="1" height="1"/><rect x="113.00" y="258.50" width="1" height="1"/><rect x="113.00" y="266.00" width="1" height="1"/><rect x="113.00" y="273.50" width="1" height="1"/><rect x="113.00" y="281.00" width="1" height="1"/><rect x="113.00" y="288.50" width="1" height="1"/><rect x="113.00" y="296.00" width="1" height="1"/><rect x="113.00" y="303.50" width="1" height="1"/><rect x="113.00" y="311.00" width="1" height="1"/><rect x="113.00" y="318.50" width="1" height="1"/><rect x="113.00" y="326.00" width="1" height="1"/><rect x="113.00" y="333.50" width="1" height="1"/><rect x="113.00" y="341.00" width="1" height="1"/><rect x="113.00" y="348.50" width="1" height="1"/><rect x="113.00" y="356.00" width="1" height="1"/><rect x="113.00" y="363.50" width="1" height="1"/><rect x="150.50" y="78.50" width="1" height="1"/><rect x="150.50" y="86.00" width="1" height="1"/><rect x="150.50" y="93.50" width="1" height="1"/><rect x="150.50" y="101.00" width="1" height="1"/><rect x="150.50" y="108.50" width="1" height="1"/><rect x="150.50" y="116.00" width="1" height="1"/><rect x="150.50" y="123.50" width="1" height="1"/><rect x="150.50" y="131.00" width="1" height="1"/><rect x="150.50" y="138.50" width="1" height="1"/><rect x="150.50" y="146.00" width="1" height="1"/><rect x="150.50" y="153.50" width="1" height="1"/><rect x="150.50" y="161.00" width="1" height="1"/><rect x="150.50" y="168.50" width="1" height="1"/><rect x="150.50" y="176.00" width="1" height="1"/><rect x="150.50" y="183.50" width="1" height="1"/><rect x="150.50" y="191.00" width="1" height="1"/><rect x="150.50" y="198.50" width="1" height="1"/><rect x="150.50" y="206.00" width="1" height="1"/><rect x="150.50" y="213.50" width="1" height="1"/><rect x="150.50" y="221.00" width="1" height="1"/><rect x="150.50" y="228.50" width="1" height="1"/><rect x="150.50" y="236.00" width="1" height="1"/><rect x="150.50" y="243.50" width="1" height="1"/><rect x="150.50" y="251.00" width="1" height="1"/><rect x="150.50" y="258.50" width="1" height="1"/><rect x="150.50" y="266.00" width="1" height="1"/><rect x="150.50" y="273.50" width="1" height="1"/><rect x="150.50" y="281.00" width="1" height="1"/><rect x="150.50" y="288.50" width="1" height="1"/><rect x="150.50" y="296.00" width="1" height="1"/><rect x="150.50" y="303.50" width="1" height="1"/><rect x="150.50" y="311.00" width="1" height="1"/><rect x="150.50" y="318.50" width="1" height="1"/><rect x="150.50" y="326.00" width="1" height="1"/><rect x="150.50" y="333.50" width="1" height="1"/><rect x="150.50" y="341.00" width="1" height="1"/><rect x="150.50" y="348.50" width="1" height="1"/><rect x="150.50" y="356.00" width="1" height="1"/><rect x="150.50" y="363.50" width="1" height="1"/><rect x="188.00" y="78.50" width="1" height="1"/><rect x="188.00" y="86.00" width="1" height="1"/><rect x="188.00" y="93.50" width="1" height="1"/><rect x="188.00" y="101.00" width="1" height="1"/><rect x="188.00" y="108.50" width="1" height="1"/><rect x="188.00" y="116.00" width="1" height="1"/><rect x="188.00" y="123.50" width="1" height="1"/><rect x="188.00" y="131.00" width="1" height="1"/><rect x="188.00" y="138.50" width="1" height="1"/><rect x="188.00" y="146.00" width="1" height="1"/><rect x="188.00" y="153.50" width="1" height="1"/><rect x="188.00" y="161.00" width="1" height="1"/><rect x="188.00" y="168.50" width="1" height="1"/><rect x="188.00" y="176.00" width="1" height="1"/><rect x="188.00" y="183.50" width="1" height="1"/><rect x="188.00" y="191.00" width="1" height="1"/><rect x="188.00" y="198.50" width="1" height="1"/><rect x="188.00" y="206.00" width="1" height="1"/><rect x="188.00" y="213.50" width="1" height="1"/><rect x="188.00" y="221.00" width="1" height="1"/><rect x="188.00" y="228.50" width="1" height="1"/><rect x="188.00" y="236.00" width="1" height="1"/><rect x="188.00" y="243.50" width="1" height="1"/><rect x="188.00" y="251.00" width="1" height="1"/><rect x="188.00" y="258.50" width="1" height="1"/><rect x="188.00" y="266.00" width="1" height="1"/><rect x="188.00" y="273.50" width="1" height="1"/><rect x="188.00" y="281.00" width="1" height="1"/><rect x="188.00" y="288.50" width="1" height="1"/><rect x="188.00" y="296.00" width="1" height="1"/><rect x="188.00" y="303.50" width="1" height="1"/><rect x="188.00" y="311.00" width="1" height="1"/><rect x="188.00" y="318.50" width="1" height="1"/><rect x="188.00" y="326.00" width="1" height="1"/><rect x="188.00" y="333.50" width="1" height="1"/><rect x="188.00" y="341.00" width="1" height="1"/><rect x="188.00" y="348.50" width="1" height="1"/><rect x="188.00" y="356.00" width="1" height="1"/><rect x="188.00" y="363.50" width="1" height="1"/><rect x="225.50" y="78.50" width="1" height="1"/><rect x="225.50" y="86.00" width="1" height="1"/><rect x="225.50" y="93.50" width="1" height="1"/><rect x="225.50" y="101.00" width="1" height="1"/><rect x="225.50" y="108.50" width="1" height="1"/><rect x="225.50" y="116.00" width="1" height="1"/><rect x="225.50" y="123.50" width="1" height="1"/><rect x="225.50" y="131.00" width="1" height="1"/><rect x="225.50" y="138.50" width="1" height="1"/><rect x="225.50" y="146.00" width="1" height="1"/><rect x="225.50" y="153.50" width="1" height="1"/><rect x="225.50" y="161.00" width="1" height="1"/><rect x="225.50" y="168.50" width="1" height="1"/><rect x="225.50" y="176.00" width="1" height="1"/><rect x="225.50" y="183.50" width="1" height="1"/><rect x="225.50" y="191.00" width="1" height="1"/><rect x="225.50" y="198.50" width="1" height="1"/><rect x="225.50" y="206.00" width="1" height="1"/><rect x="225.50" y="213.50" width="1" height="1"/><rect x="225.50" y="221.00" width="1" height="1"/><rect x="225.50" y="228.50" width="1" height="1"/><rect x="225.50" y="236.00" width="1" height="1"/><rect x="225.50" y="243.50" width="1" height="1"/><rect x="225.50" y="251.00" width="1" height="1"/><rect x="225.50" y="258.50" width="1" height="1"/><rect x="225.50" y="266.00" width="1" height="1"/><rect x="225.50" y="273.50" width="1" height="1"/><rect x="225.50" y="281.00" width="1" height="1"/><rect x="225.50" y="288.50" width="1" height="1"/><rect x="225.50" y="296.00" width="1" height="1"/><rect x="225.50" y="303.50" width="1" height="1"/><rect x="225.50" y="311.00" width="1" height="1"/><rect x="225.50" y="318.50" width="1" height="1"/><rect x="225.50" y="326.00" width="1" height="1"/><rect x="225.50" y="333.50" width="1" height="1"/><rect x="225.50" y="341.00" width="1" height="1"/><rect x="225.50" y="348.50" width="1" height="1"/><rect x="225.50" y="356.00" width="1" height="1"/><rect x="225.50" y="363.50" width="1" height="1"/><rect x="263.00" y="78.50" width="1" height="1"/><rect x="263.00" y="86.00" width="1" height="1"/><rect x="263.00" y="93.50" width="1" height="1"/><rect x="263.00" y="101.00" width="1" height="1"/><rect x="263.00" y="108.50" width="1" height="1"/><rect x="263.00" y="116.00" width="1" height="1"/><rect x="263.00" y="123.50" width="1" height="1"/><rect x="263.00" y="131.00" width="1" height="1"/><rect x="263.00" y="138.50" width="1" height="1"/><rect x="263.00" y="146.00" width="1" height="1"/><rect x="263.00" y="153.50" width="1" height="1"/><rect x="263.00" y="161.00" width="1" height="1"/><rect x="263.00" y="168.50" width="1" height="1"/><rect x="263.00" y="176.00" width="1" height="1"/><rect x="263.00" y="183.50" width="1" height="1"/><rect x="263.00" y="191.00" width="1" height="1"/><rect x="263.00" y="198.50" width="1" height="1"/><rect x="263.00" y="206.00" width="1" height="1"/><rect x="263.00" y="213.50" width="1" height="1"/><rect x="263.00" y="221.00" width="1" height="1"/><rect x="263.00" y="228.50" width="1" height="1"/><rect x="263.00" y="236.00" width="1" height="1"/><rect x="263.00" y="243.50" width="1" height="1"/><rect x="263.00" y="251.00" width="1" height="1"/><rect x="263.00" y="258.50" width="1" height="1"/><rect x="263.00" y="266.00" width="1" height="1"/><rect x="263.00" y="273.50" width="1" height="1"/><rect x="263.00" y="281.00" width="1" height="1"/><rect x="263.00" y="288.50" width="1" height="1"/><rect x="263.00" y="296.00" width="1" height="1"/><rect x="263.00" y="303.50" width="1" height="1"/><rect x="263.00" y="311.00" width="1" height="1"/><rect x="263.00" y="318.50" width="1" height="1"/><rect x="263.00" y="326.00" width="1" height="1"/><rect x="263.00" y="333.50" width="1" height="1"/><rect x="263.00" y="341.00" width="1" height="1"/><rect x="263.00" y="348.50" width="1" height="1"/><rect x="263.00" y="356.00" width="1" height="1"/><rect x="263.00" y="363.50" width="1" height="1"/><rect x="300.50" y="78.50" width="1" height="1"/><rect x="300.50" y="86.00" width="1" height="1"/><rect x="300.50" y="93.50" width="1" height="1"/><rect x="300.50" y="101.00" width="1" height="1"/><rect x="300.50" y="108.50" width="1" height="1"/><rect x="300.50" y="116.00" width="1" height="1"/><rect x="300.50" y="123.50" width="1" height="1"/><rect x="300.50" y="131.00" width="1" height="1"/><rect x="300.50" y="138.50" width="1" height="1"/><rect x="300.50" y="146.00" width="1" height="1"/><rect x="300.50" y="153.50" width="1" height="1"/><rect x="300.50" y="161.00" width="1" height="1"/><rect x="300.50" y="168.50" width="1" height="1"/><rect x="300.50" y="176.00" width="1" height="1"/><rect x="300.50" y="183.50" width="1" height="1"/><rect x="300.50" y="191.00" width="1" height="1"/><rect x="300.50" y="198.50" width="1" height="1"/><rect x="300.50" y="206.00" width="1" height="1"/><rect x="300.50" y="213.50" width="1" height="1"/><rect x="300.50" y="221.00" width="1" height="1"/><rect x="300.50" y="228.50" width="1" height="1"/><rect x="300.50" y="236.00" width="1" height="1"/><rect x="300.50" y="243.50" width="1" height="1"/><rect x="300.50" y="251.00" width="1" height="1"/><rect x="300.50" y="258.50" width="1" height="1"/><rect x="300.50" y="266.00" width="1" height="1"/><rect x="300.50" y="273.50" width="1" height="1"/><rect x="300.50" y="281.00" width="1" height="1"/><rect x="300.50" y="288.50" width="1" height="1"/><rect x="300.50" y="296.00" width="1" height="1"/><rect x="300.50" y="303.50" width="1" height="1"/><rect x="300.50" y="311.00" width="1" height="1"/><rect x="300.50" y="318.50" width="1" height="1"/><rect x="300.50" y="326.00" width="1" height="1"/><rect x="300.50" y="333.50" width="1" height="1"/><rect x="300.50" y="341.00" width="1" height="1"/><rect x="300.50" y="348.50" width="1" height="1"/><rect x="300.50" y="356.00" width="1" height="1"/><rect x="300.50" y="363.50" width="1" height="1"/><rect x="338.00" y="78.50" width="1" height="1"/><rect x="338.00" y="86.00" width="1" height="1"/><rect x="338.00" y="93.50" width="1" height="1"/><rect x="338.00" y="101.00" width="1" height="1"/><rect x="338.00" y="108.50" width="1" height="1"/><rect x="338.00" y="116.00" width="1" height="1"/><rect x="338.00" y="123.50" width="1" height="1"/><rect x="338.00" y="131.00" width="1" height="1"/><rect x="338.00" y="138.50" width="1" height="1"/><rect x="338.00" y="146.00" width="1" height="1"/><rect x="338.00" y="153.50" width="1" height="1"/><rect x="338.00" y="161.00" width="1" height="1"/><rect x="338.00" y="168.50" width="1" height="1"/><rect x="338.00" y="176.00" width="1" height="1"/><rect x="338.00" y="183.50" width="1" height="1"/><rect x="338.00" y="191.00" width="1" height="1"/><rect x="338.00" y="198.50" width="1" height="1"/><rect x="338.00" y="206.00" width="1" height="1"/><rect x="338.00" y="213.50" width="1" height="1"/><rect x="338.00" y="221.00" width="1" height="1"/><rect x="338.00" y="228.50" width="1" height="1"/><rect x="338.00" y="236.00" width="1" height="1"/><rect x="338.00" y="243.50" width="1" height="1"/><rect x="338.00" y="251.00" width="1" height="1"/><rect x="338.00" y="258.50" width="1" height="1"/><rect x="338.00" y="266.00" width="1" height="1"/><rect x="338.00" y="273.50" width="1" height="1"/><rect x="338.00" y="281.00" width="1" height="1"/><rect x="338.00" y="288.50" width="1" height="1"/><rect x="338.00" y="296.00" width="1" height="1"/><rect x="338.00" y="303.50" width="1" height="1"/><rect x="338.00" y="311.00" width="1" height="1"/><rect x="338.00" y="318.50" width="1" height="1"/><rect x="338.00" y="326.00" width="1" height="1"/><rect x="338.00" y="333.50" width="1" height="1"/><rect x="338.00" y="341.00" width="1" height="1"/><rect x="338.00" y="348.50" width="1" height="1"/><rect x="338.00" y="356.00" width="1" height="1"/><rect x="338.00" y="363.50" width="1" height="1"/><rect x="375.50" y="78.50" width="1" height="1"/><rect x="375.50" y="86.00" width="1" height="1"/><rect x="375.50" y="93.50" width="1" height="1"/><rect x="375.50" y="101.00" width="1" height="1"/><rect x="375.50" y="108.50" width="1" height="1"/><rect x="375.50" y="116.00" width="1" height="1"/><rect x="375.50" y="123.50" width="1" height="1"/><rect x="375.50" y="131.00" width="1" height="1"/><rect x="375.50" y="138.50" width="1" height="1"/><rect x="375.50" y="146.00" width="1" height="1"/><rect x="375.50" y="153.50" width="1" height="1"/><rect x="375.50" y="161.00" width="1" height="1"/><rect x="375.50" y="168.50" width="1" height="1"/><rect x="375.50" y="176.00" width="1" height="1"/><rect x="375.50" y="183.50" width="1" height="1"/><rect x="375.50" y="191.00" width="1" height="1"/><rect x="375.50" y="198.50" width="1" height="1"/><rect x="375.50" y="206.00" width="1" height="1"/><rect x="375.50" y="213.50" width="1" height="1"/><rect x="375.50" y="221.00" width="1" height="1"/><rect x="375.50" y="228.50" width="1" height="1"/><rect x="375.50" y="236.00" width="1" height="1"/><rect x="375.50" y="243.50" width="1" height="1"/><rect x="375.50" y="251.00" width="1" height="1"/><rect x="375.50" y="258.50" width="1" height="1"/><rect x="375.50" y="266.00" width="1" height="1"/><rect x="375.50" y="273.50" width="1" height="1"/><rect x="375.50" y="281.00" width="1" height="1"/><rect x="375.50" y="288.50" width="1" height="1"/><rect x="375.50" y="296.00" width="1" height="1"/><rect x="375.50" y="303.50" width="1" height="1"/><rect x="375.50" y="311.00" width="1" height="1"/><rect x="375.50" y="318.50" width="1" height="1"/><rect x="375.50" y="326.00" width="1" height="1"/><rect x="375.50" y="333.50" width="1" height="1"/><rect x="375.50" y="341.00" width="1" height="1"/><rect x="375.50" y="348.50" width="1" height="1"/><rect x="375.50" y="356.00" width="1" height="1"/><rect x="375.50" y="363.50" width="1" height="1"/><rect x="413.00" y="78.50" width="1" height="1"/><rect x="413.00" y="86.00" width="1" height="1"/><rect x="413.00" y="93.50" width="1" height="1"/><rect x="413.00" y="101.00" width="1" height="1"/><rect x="413.00" y="108.50" width="1" height="1"/><rect x="413.00" y="116.00" width="1" height="1"/><rect x="413.00" y="123.50" width="1" height="1"/><rect x="413.00" y="131.00" width="1" height="1"/><rect x="413.00" y="138.50" width="1" height="1"/><rect x="413.00" y="146.00" width="1" height="1"/><rect x="413.00" y="153.50" width="1" height="1"/><rect x="413.00" y="161.00" width="1" height="1"/><rect x="413.00" y="168.50" width="1" height="1"/><rect x="413.00" y="176.00" width="1" height="1"/><rect x="413.00" y="183.50" width="1" height="1"/><rect x="413.00" y="191.00" width="1" height="1"/><rect x="413.00" y="198.50" width="1" height="1"/><rect x="413.00" y="206.00" width="1" height="1"/><rect x="413.00" y="213.50" width="1" height="1"/><rect x="413.00" y="221.00" width="1" height="1"/><rect x="413.00" y="228.50" width="1" height="1"/><rect x="413.00" y="236.00" width="1" height="1"/><rect x="413.00" y="243.50" width="1" height="1"/><rect x="413.00" y="251.00" width="1" height="1"/><rect x="413.00" y="258.50" width="1" height="1"/><rect x="413.00" y="266.00" width="1" height="1"/><rect x="413.00" y="273.50" width="1" height="1"/><rect x="413.00" y="281.00" width="1" height="1"/><rect x="413.00" y="288.50" width="1" height="1"/><rect x="413.00" y="296.00" width="1" height="1"/><rect x="413.00" y="303.50" width="1" height="1"/><rect x="413.00" y="311.00" width="1" height="1"/><rect x="413.00" y="318.50" width="1" height="1"/><rect x="413.00" y="326.00" width="1" height="1"/><rect x="413.00" y="333.50" width="1" height="1"/><rect x="413.00" y="341.00" width="1" height="1"/><rect x="413.00" y="348.50" width="1" height="1"/><rect x="413.00" y="356.00" width="1" height="1"/><rect x="413.00" y="363.50" width="1" height="1"/><rect x="450.50" y="78.50" width="1" height="1"/><rect x="450.50" y="86.00" width="1" height="1"/><rect x="450.50" y="93.50" width="1" height="1"/><rect x="450.50" y="101.00" width="1" height="1"/><rect x="450.50" y="108.50" width="1" height="1"/><rect x="450.50" y="116.00" width="1" height="1"/><rect x="450.50" y="123.50" width="1" height="1"/><rect x="450.50" y="131.00" width="1" height="1"/><rect x="450.50" y="138.50" width="1" height="1"/><rect x="450.50" y="146.00" width="1" height="1"/><rect x="450.50" y="153.50" width="1" height="1"/><rect x="450.50" y="161.00" width="1" height="1"/><rect x="450.50" y="168.50" width="1" height="1"/><rect x="450.50" y="176.00" width="1" height="1"/><rect x="450.50" y="183.50" width="1" height="1"/><rect x="450.50" y="191.00" width="1" height="1"/><rect x="450.50" y="198.50" width="1" height="1"/><rect x="450.50" y="206.00" width="1" height="1"/><rect x="450.50" y="213.50" width="1" height="1"/><rect x="450.50" y="221.00" width="1" height="1"/><rect x="450.50" y="228.50" width="1" height="1"/><rect x="450.50" y="236.00" width="1" height="1"/><rect x="450.50" y="243.50" width="1" height="1"/><rect x="450.50" y="251.00" width="1" height="1"/><rect x="450.50" y="258.50" width="1" height="1"/><rect x="450.50" y="266.00" width="1" height="1"/><rect x="450.50" y="273.50" width="1" height="1"/><rect x="450.50" y="281.00" width="1" height="1"/><rect x="450.50" y="288.50" width="1" height="1"/><rect x="450.50" y="296.00" width="1" height="1"/><rect x="450.50" y="303.50" width="1" height="1"/><rect x="450.50" y="311.00" width="1" height="1"/><rect x="450.50" y="318.50" width="1" height="1"/><rect x="450.50" y="326.00" width="1" height="1"/><rect x="450.50" y="333.50" width="1" height="1"/><rect x="450.50" y="341.00" width="1" height="1"/><rect x="450.50" y="348.50" width="1" height="1"/><rect x="450.50" y="356.00" width="1" height="1"/><rect x="450.50" y="363.50" width="1" height="1"/><rect x="488.00" y="78.50" width="1" height="1"/><rect x="488.00" y="86.00" width="1" height="1"/><rect x="488.00" y="93.50" width="1" height="1"/><rect x="488.00" y="101.00" width="1" height="1"/><rect x="488.00" y="108.50" width="1" height="1"/><rect x="488.00" y="116.00" width="1" height="1"/><rect x="488.00" y="123.50" width="1" height="1"/><rect x="488.00" y="131.00" width="1" height="1"/><rect x="488.00" y="138.50" width="1" height="1"/><rect x="488.00" y="146.00" width="1" height="1"/><rect x="488.00" y="153.50" width="1" height="1"/><rect x="488.00" y="161.00" width="1" height="1"/><rect x="488.00" y="168.50" width="1" height="1"/><rect x="488.00" y="176.00" width="1" height="1"/><rect x="488.00" y="183.50" width="1" height="1"/><rect x="488.00" y="191.00" width="1" height="1"/><rect x="488.00" y="198.50" width="1" height="1"/><rect x="488.00" y="206.00" width="1" height="1"/><rect x="488.00" y="213.50" width="1" height="1"/><rect x="488.00" y="221.00" width="1" height="1"/><rect x="488.00" y="228.50" width="1" height="1"/><rect x="488.00" y="236.00" width="1" height="1"/><rect x="488.00" y="243.50" width="1" height="1"/><rect x="488.00" y="251.00" width="1" height="1"/><rect x="488.00" y="258.50" width="1" height="1"/><rect x="488.00" y="266.00" width="1" height="1"/><rect x="488.00" y="273.50" width="1" height="1"/><rect x="488.00" y="281.00" width="1" height="1"/><rect x="488.00" y="288.50" width="1" height="1"/><rect x="488.00" y="296.00" width="1" height="1"/><rect x="488.00" y="303.50" width="1" height="1"/><rect x="488.00" y="311.00" width="1" height="1"/><rect x="488.00" y="318.50" width="1" height="1"/><rect x="488.00" y="326.00" width="1" height="1"/><rect x="488.00" y="333.50" width="1" height="1"/><rect x="488.00" y="341.00" width="1" height="1"/><rect x="488.00" y="348.50" width="1" height="1"/><rect x="488.00" y="356.00" width="1" height="1"/><rect x="488.00" y="363.50" width="1" height="1"/><rect x="525.50" y="78.50" width="1" height="1"/><rect x="525.50" y="86.00" width="1" height="1"/><rect x="525.50" y="93.50" width="1" height="1"/><rect x="525.50" y="101.00" width="1" height="1"/><rect x="525.50" y="108.50" width="1" height="1"/><rect x="525.50" y="116.00" width="1" height="1"/><rect x="525.50" y="123.50" width="1" height="1"/><rect x="525.50" y="131.00" width="1" height="1"/><rect x="525.50" y="138.50" width="1" height="1"/><rect x="525.50" y="146.00" width="1" height="1"/><rect x="525.50" y="153.50" width="1" height="1"/><rect x="525.50" y="161.00" width="1" height="1"/><rect x="525.50" y="168.50" width="1" height="1"/><rect x="525.50" y="176.00" width="1" height="1"/><rect x="525.50" y="183.50" width="1" height="1"/><rect x="525.50" y="191.00" width="1" height="1"/><rect x="525.50" y="198.50" width="1" height="1"/><rect x="525.50" y="206.00" width="1" height="1"/><rect x="525.50" y="213.50" width="1" height="1"/><rect x="525.50" y="221.00" width="1" height="1"/><rect x="525.50" y="228.50" width="1" height="1"/><rect x="525.50" y="236.00" width="1" height="1"/><rect x="525.50" y="243.50" width="1" height="1"/><rect x="525.50" y="251.00" width="1" height="1"/><rect x="525.50" y="258.50" width="1" height="1"/><rect x="525.50" y="266.00" width="1" height="1"/><rect x="525.50" y="273.50" width="1" height="1"/><rect x="525.50" y="281.00" width="1" height="1"/><rect x="525.50" y="288.50" width="1" height="1"/><rect x="525.50" y="296.00" width="1" height="1"/><rect x="525.50" y="303.50" width="1" height="1"/><rect x="525.50" y="311.00" width="1" height="1"/><rect x="525.50" y="318.50" width="1" height="1"/><rect x="525.50" y="326.00" width="1" height="1"/><rect x="525.50" y="333.50" width="1" height="1"/><rect x="525.50" y="341.00" width="1" height="1"/><rect x="525.50" y="348.50" width="1" height="1"/><rect x="525.50" y="356.00" width="1" height="1"/><rect x="525.50" y="363.50" width="1" height="1"/></g><g fill="#6e6e6e"><rect x="41.75" y="72" width="1" height="1.6"/><rect x="41.75" y="369.4" width="1" height="1.6"/><rect x="45.50" y="72" width="1" height="1.6"/><rect x="45.50" y="369.4" width="1" height="1.6"/><rect x="49.25" y="72" width="1" height="1.6"/><rect x="49.25" y="369.4" width="1" height="1.6"/><rect x="53.00" y="72" width="1" height="1.6"/><rect x="53.00" y="369.4" width="1" height="1.6"/><rect x="56.75" y="72" width="1" height="1.6"/><rect x="56.75" y="369.4" width="1" height="1.6"/><rect x="60.50" y="72" width="1" height="1.6"/><rect x="60.50" y="369.4" width="1" height="1.6"/><rect x="64.25" y="72" width="1" height="1.6"/><rect x="64.25" y="369.4" width="1" height="1.6"/><rect x="68.00" y="72" width="1" height="1.6"/><rect x="68.00" y="369.4" width="1" height="1.6"/><rect x="71.75" y="72" width="1" height="1.6"/><rect x="71.75" y="369.4" width="1" height="1.6"/><rect x="75.50" y="72" width="1" height="1.6"/><rect x="75.50" y="369.4" width="1" height="1.6"/><rect x="79.25" y="72" width="1" height="1.6"/><rect x="79.25" y="369.4" width="1" height="1.6"/><rect x="83.00" y="72" width="1" height="1.6"/><rect x="83.00" y="369.4" width="1" height="1.6"/><rect x="86.75" y="72" width="1" height="1.6"/><rect x="86.75" y="369.4" width="1" height="1.6"/><rect x="90.50" y="72" width="1" height="1.6"/><rect x="90.50" y="369.4" width="1" height="1.6"/><rect x="94.25" y="72" width="1" height="1.6"/><rect x="94.25" y="369.4" width="1" height="1.6"/><rect x="98.00" y="72" width="1" height="1.6"/><rect x="98.00" y="369.4" width="1" height="1.6"/><rect x="101.75" y="72" width="1" height="1.6"/><rect x="101.75" y="369.4" width="1" height="1.6"/><rect x="105.50" y="72" width="1" height="1.6"/><rect x="105.50" y="369.4" width="1" height="1.6"/><rect x="109.25" y="72" width="1" height="1.6"/><rect x="109.25" y="369.4" width="1" height="1.6"/><rect x="113.00" y="72" width="1" height="1.6"/><rect x="113.00" y="369.4" width="1" height="1.6"/><rect x="116.75" y="72" width="1" height="1.6"/><rect x="116.75" y="369.4" width="1" height="1.6"/><rect x="120.50" y="72" width="1" height="1.6"/><rect x="120.50" y="369.4" width="1" height="1.6"/><rect x="124.25" y="72" width="1" height="1.6"/><rect x="124.25" y="369.4" width="1" height="1.6"/><rect x="128.00" y="72" width="1" height="1.6"/><rect x="128.00" y="369.4" width="1" height="1.6"/><rect x="131.75" y="72" width="1" height="1.6"/><rect x="131.75" y="369.4" width="1" height="1.6"/><rect x="135.50" y="72" width="1" height="1.6"/><rect x="135.50" y="369.4" width="1" height="1.6"/><rect x="139.25" y="72" width="1" height="1.6"/><rect x="139.25" y="369.4" width="1" height="1.6"/><rect x="143.00" y="72" width="1" height="1.6"/><rect x="143.00" y="369.4" width="1" height="1.6"/><rect x="146.75" y="72" width="1" height="1.6"/><rect x="146.75" y="369.4" width="1" height="1.6"/><rect x="150.50" y="72" width="1" height="1.6"/><rect x="150.50" y="369.4" width="1" height="1.6"/><rect x="154.25" y="72" width="1" height="1.6"/><rect x="154.25" y="369.4" width="1" height="1.6"/><rect x="158.00" y="72" width="1" height="1.6"/><rect x="158.00" y="369.4" width="1" height="1.6"/><rect x="161.75" y="72" width="1" height="1.6"/><rect x="161.75" y="369.4" width="1" height="1.6"/><rect x="165.50" y="72" width="1" height="1.6"/><rect x="165.50" y="369.4" width="1" height="1.6"/><rect x="169.25" y="72" width="1" height="1.6"/><rect x="169.25" y="369.4" width="1" height="1.6"/><rect x="173.00" y="72" width="1" height="1.6"/><rect x="173.00" y="369.4" width="1" height="1.6"/><rect x="176.75" y="72" width="1" height="1.6"/><rect x="176.75" y="369.4" width="1" height="1.6"/><rect x="180.50" y="72" width="1" height="1.6"/><rect x="180.50" y="369.4" width="1" height="1.6"/><rect x="184.25" y="72" width="1" height="1.6"/><rect x="184.25" y="369.4" width="1" height="1.6"/><rect x="188.00" y="72" width="1" height="1.6"/><rect x="188.00" y="369.4" width="1" height="1.6"/><rect x="191.75" y="72" width="1" height="1.6"/><rect x="191.75" y="369.4" width="1" height="1.6"/><rect x="195.50" y="72" width="1" height="1.6"/><rect x="195.50" y="369.4" width="1" height="1.6"/><rect x="199.25" y="72" width="1" height="1.6"/><rect x="199.25" y="369.4" width="1" height="1.6"/><rect x="203.00" y="72" width="1" height="1.6"/><rect x="203.00" y="369.4" width="1" height="1.6"/><rect x="206.75" y="72" width="1" height="1.6"/><rect x="206.75" y="369.4" width="1" height="1.6"/><rect x="210.50" y="72" width="1" height="1.6"/><rect x="210.50" y="369.4" width="1" height="1.6"/><rect x="214.25" y="72" width="1" height="1.6"/><rect x="214.25" y="369.4" width="1" height="1.6"/><rect x="218.00" y="72" width="1" height="1.6"/><rect x="218.00" y="369.4" width="1" height="1.6"/><rect x="221.75" y="72" width="1" height="1.6"/><rect x="221.75" y="369.4" width="1" height="1.6"/><rect x="225.50" y="72" width="1" height="1.6"/><rect x="225.50" y="369.4" width="1" height="1.6"/><rect x="229.25" y="72" width="1" height="1.6"/><rect x="229.25" y="369.4" width="1" height="1.6"/><rect x="233.00" y="72" width="1" height="1.6"/><rect x="233.00" y="369.4" width="1" height="1.6"/><rect x="236.75" y="72" width="1" height="1.6"/><rect x="236.75" y="369.4" width="1" height="1.6"/><rect x="240.50" y="72" width="1" height="1.6"/><rect x="240.50" y="369.4" width="1" height="1.6"/><rect x="244.25" y="72" width="1" height="1.6"/><rect x="244.25" y="369.4" width="1" height="1.6"/><rect x="248.00" y="72" width="1" height="1.6"/><rect x="248.00" y="369.4" width="1" height="1.6"/><rect x="251.75" y="72" width="1" height="1.6"/><rect x="251.75" y="369.4" width="1" height="1.6"/><rect x="255.50" y="72" width="1" height="1.6"/><rect x="255.50" y="369.4" width="1" height="1.6"/><rect x="259.25" y="72" width="1" height="1.6"/><rect x="259.25" y="369.4" width="1" height="1.6"/><rect x="263.00" y="72" width="1" height="1.6"/><rect x="263.00" y="369.4" width="1" height="1.6"/><rect x="266.75" y="72" width="1" height="1.6"/><rect x="266.75" y="369.4" width="1" height="1.6"/><rect x="270.50" y="72" width="1" height="1.6"/><rect x="270.50" y="369.4" width="1" height="1.6"/><rect x="274.25" y="72" width="1" height="1.6"/><rect x="274.25" y="369.4" width="1" height="1.6"/><rect x="278.00" y="72" width="1" height="1.6"/><rect x="278.00" y="369.4" width="1" height="1.6"/><rect x="281.75" y="72" width="1" height="1.6"/><rect x="281.75" y="369.4" width="1" height="1.6"/><rect x="285.50" y="72" width="1" height="1.6"/><rect x="285.50" y="369.4" width="1" height="1.6"/><rect x="289.25" y="72" width="1" height="1.6"/><rect x="289.25" y="369.4" width="1" height="1.6"/><rect x="293.00" y="72" width="1" height="1.6"/><rect x="293.00" y="369.4" width="1" height="1.6"/><rect x="296.75" y="72" width="1" height="1.6"/><rect x="296.75" y="369.4" width="1" height="1.6"/><rect x="300.50" y="72" width="1" height="1.6"/><rect x="300.50" y="369.4" width="1" height="1.6"/><rect x="304.25" y="72" width="1" height="1.6"/><rect x="304.25" y="369.4" width="1" height="1.6"/><rect x="308.00" y="72" width="1" height="1.6"/><rect x="308.00" y="369.4" width="1" height="1.6"/><rect x="311.75" y="72" width="1" height="1.6"/><rect x="311.75" y="369.4" width="1" height="1.6"/><rect x="315.50" y="72" width="1" height="1.6"/><rect x="315.50" y="369.4" width="1" height="1.6"/><rect x="319.25" y="72" width="1" height="1.6"/><rect x="319.25" y="369.4" width="1" height="1.6"/><rect x="323.00" y="72" width="1" height="1.6"/><rect x="323.00" y="369.4" width="1" height="1.6"/><rect x="326.75" y="72" width="1" height="1.6"/><rect x="326.75" y="369.4" width="1" height="1.6"/><rect x="330.50" y="72" width="1" height="1.6"/><rect x="330.50" y="369.4" width="1" height="1.6"/><rect x="334.25" y="72" width="1" height="1.6"/><rect x="334.25" y="369.4" width="1" height="1.6"/><rect x="338.00" y="72" width="1" height="1.6"/><rect x="338.00" y="369.4" width="1" height="1.6"/><rect x="341.75" y="72" width="1" height="1.6"/><rect x="341.75" y="369.4" width="1" height="1.6"/><rect x="345.50" y="72" width="1" height="1.6"/><rect x="345.50" y="369.4" width="1" height="1.6"/><rect x="349.25" y="72" width="1" height="1.6"/><rect x="349.25" y="369.4" width="1" height="1.6"/><rect x="353.00" y="72" width="1" height="1.6"/><rect x="353.00" y="369.4" width="1" height="1.6"/><rect x="356.75" y="72" width="1" height="1.6"/><rect x="356.75" y="369.4" width="1" height="1.6"/><rect x="360.50" y="72" width="1" height="1.6"/><rect x="360.50" y="369.4" width="1" height="1.6"/><rect x="364.25" y="72" width="1" height="1.6"/><rect x="364.25" y="369.4" width="1" height="1.6"/><rect x="368.00" y="72" width="1" height="1.6"/><rect x="368.00" y="369.4" width="1" height="1.6"/><rect x="371.75" y="72" width="1" height="1.6"/><rect x="371.75" y="369.4" width="1" height="1.6"/><rect x="375.50" y="72" width="1" height="1.6"/><rect x="375.50" y="369.4" width="1" height="1.6"/><rect x="379.25" y="72" width="1" height="1.6"/><rect x="379.25" y="369.4" width="1" height="1.6"/><rect x="383.00" y="72" width="1" height="1.6"/><rect x="383.00" y="369.4" width="1" height="1.6"/><rect x="386.75" y="72" width="1" height="1.6"/><rect x="386.75" y="369.4" width="1" height="1.6"/><rect x="390.50" y="72" width="1" height="1.6"/><rect x="390.50" y="369.4" width="1" height="1.6"/><rect x="394.25" y="72" width="1" height="1.6"/><rect x="394.25" y="369.4" width="1" height="1.6"/><rect x="398.00" y="72" width="1" height="1.6"/><rect x="398.00" y="369.4" width="1" height="1.6"/><rect x="401.75" y="72" width="1" height="1.6"/><rect x="401.75" y="369.4" width="1" height="1.6"/><rect x="405.50" y="72" width="1" height="1.6"/><rect x="405.50" y="369.4" width="1" height="1.6"/><rect x="409.25" y="72" width="1" height="1.6"/><rect x="409.25" y="369.4" width="1" height="1.6"/><rect x="413.00" y="72" width="1" height="1.6"/><rect x="413.00" y="369.4" width="1" height="1.6"/><rect x="416.75" y="72" width="1" height="1.6"/><rect x="416.75" y="369.4" width="1" height="1.6"/><rect x="420.50" y="72" width="1" height="1.6"/><rect x="420.50" y="369.4" width="1" height="1.6"/><rect x="424.25" y="72" width="1" height="1.6"/><rect x="424.25" y="369.4" width="1" height="1.6"/><rect x="428.00" y="72" width="1" height="1.6"/><rect x="428.00" y="369.4" width="1" height="1.6"/><rect x="431.75" y="72" width="1" height="1.6"/><rect x="431.75" y="369.4" width="1" height="1.6"/><rect x="435.50" y="72" width="1" height="1.6"/><rect x="435.50" y="369.4" width="1" height="1.6"/><rect x="439.25" y="72" width="1" height="1.6"/><rect x="439.25" y="369.4" width="1" height="1.6"/><rect x="443.00" y="72" width="1" height="1.6"/><rect x="443.00" y="369.4" width="1" height="1.6"/><rect x="446.75" y="72" width="1" height="1.6"/><rect x="446.75" y="369.4" width="1" height="1.6"/><rect x="450.50" y="72" width="1" height="1.6"/><rect x="450.50" y="369.4" width="1" height="1.6"/><rect x="454.25" y="72" width="1" height="1.6"/><rect x="454.25" y="369.4" width="1" height="1.6"/><rect x="458.00" y="72" width="1" height="1.6"/><rect x="458.00" y="369.4" width="1" height="1.6"/><rect x="461.75" y="72" width="1" height="1.6"/><rect x="461.75" y="369.4" width="1" height="1.6"/><rect x="465.50" y="72" width="1" height="1.6"/><rect x="465.50" y="369.4" width="1" height="1.6"/><rect x="469.25" y="72" width="1" height="1.6"/><rect x="469.25" y="369.4" width="1" height="1.6"/><rect x="473.00" y="72" width="1" height="1.6"/><rect x="473.00" y="369.4" width="1" height="1.6"/><rect x="476.75" y="72" width="1" height="1.6"/><rect x="476.75" y="369.4" width="1" height="1.6"/><rect x="480.50" y="72" width="1" height="1.6"/><rect x="480.50" y="369.4" width="1" height="1.6"/><rect x="484.25" y="72" width="1" height="1.6"/><rect x="484.25" y="369.4" width="1" height="1.6"/><rect x="488.00" y="72" width="1" height="1.6"/><rect x="488.00" y="369.4" width="1" height="1.6"/><rect x="491.75" y="72" width="1" height="1.6"/><rect x="491.75" y="369.4" width="1" height="1.6"/><rect x="495.50" y="72" width="1" height="1.6"/><rect x="495.50" y="369.4" width="1" height="1.6"/><rect x="499.25" y="72" width="1" height="1.6"/><rect x="499.25" y="369.4" width="1" height="1.6"/><rect x="503.00" y="72" width="1" height="1.6"/><rect x="503.00" y="369.4" width="1" height="1.6"/><rect x="506.75" y="72" width="1" height="1.6"/><rect x="506.75" y="369.4" width="1" height="1.6"/><rect x="510.50" y="72" width="1" height="1.6"/><rect x="510.50" y="369.4" width="1" height="1.6"/><rect x="514.25" y="72" width="1" height="1.6"/><rect x="514.25" y="369.4" width="1" height="1.6"/><rect x="518.00" y="72" width="1" height="1.6"/><rect x="518.00" y="369.4" width="1" height="1.6"/><rect x="521.75" y="72" width="1" height="1.6"/><rect x="521.75" y="369.4" width="1" height="1.6"/><rect x="525.50" y="72" width="1" height="1.6"/><rect x="525.50" y="369.4" width="1" height="1.6"/><rect x="529.25" y="72" width="1" height="1.6"/><rect x="529.25" y="369.4" width="1" height="1.6"/><rect x="533.00" y="72" width="1" height="1.6"/><rect x="533.00" y="369.4" width="1" height="1.6"/><rect x="536.75" y="72" width="1" height="1.6"/><rect x="536.75" y="369.4" width="1" height="1.6"/><rect x="540.50" y="72" width="1" height="1.6"/><rect x="540.50" y="369.4" width="1" height="1.6"/><rect x="544.25" y="72" width="1" height="1.6"/><rect x="544.25" y="369.4" width="1" height="1.6"/><rect x="548.00" y="72" width="1" height="1.6"/><rect x="548.00" y="369.4" width="1" height="1.6"/><rect x="551.75" y="72" width="1" height="1.6"/><rect x="551.75" y="369.4" width="1" height="1.6"/><rect x="555.50" y="72" width="1" height="1.6"/><rect x="555.50" y="369.4" width="1" height="1.6"/><rect x="559.25" y="72" width="1" height="1.6"/><rect x="559.25" y="369.4" width="1" height="1.6"/><rect x="39" y="78.50" width="2" height="1"/><rect x="561" y="78.50" width="2" height="1"/><rect x="39" y="86.00" width="2" height="1"/><rect x="561" y="86.00" width="2" height="1"/><rect x="39" y="93.50" width="2" height="1"/><rect x="561" y="93.50" width="2" height="1"/><rect x="39" y="101.00" width="2" height="1"/><rect x="561" y="101.00" width="2" height="1"/><rect x="39" y="108.50" width="2" height="1"/><rect x="561" y="108.50" width="2" height="1"/><rect x="39" y="116.00" width="2" height="1"/><rect x="561" y="116.00" width="2" height="1"/><rect x="39" y="123.50" width="2" height="1"/><rect x="561" y="123.50" width="2" height="1"/><rect x="39" y="131.00" width="2" height="1"/><rect x="561" y="131.00" width="2" height="1"/><rect x="39" y="138.50" width="2" height="1"/><rect x="561" y="138.50" width="2" height="1"/><rect x="39" y="146.00" width="2" height="1"/><rect x="561" y="146.00" width="2" height="1"/><rect x="39" y="153.50" width="2" height="1"/><rect x="561" y="153.50" width="2" height="1"/><rect x="39" y="161.00" width="2" height="1"/><rect x="561" y="161.00" width="2" height="1"/><rect x="39" y="168.50" width="2" height="1"/><rect x="561" y="168.50" width="2" height="1"/><rect x="39" y="176.00" width="2" height="1"/><rect x="561" y="176.00" width="2" height="1"/><rect x="39" y="183.50" width="2" height="1"/><rect x="561" y="183.50" width="2" height="1"/><rect x="39" y="191.00" width="2" height="1"/><rect x="561" y="191.00" width="2" height="1"/><rect x="39" y="198.50" width="2" height="1"/><rect x="561" y="198.50" width="2" height="1"/><rect x="39" y="206.00" width="2" height="1"/><rect x="561" y="206.00" width="2" height="1"/><rect x="39" y="213.50" width="2" height="1"/><rect x="561" y="213.50" width="2" height="1"/><rect x="39" y="221.00" width="2" height="1"/><rect x="561" y="221.00" width="2" height="1"/><rect x="39" y="228.50" width="2" height="1"/><rect x="561" y="228.50" width="2" height="1"/><rect x="39" y="236.00" width="2" height="1"/><rect x="561" y="236.00" width="2" height="1"/><rect x="39" y="243.50" width="2" height="1"/><rect x="561" y="243.50" width="2" height="1"/><rect x="39" y="251.00" width="2" height="1"/><rect x="561" y="251.00" width="2" height="1"/><rect x="39" y="258.50" width="2" height="1"/><rect x="561" y="258.50" width="2" height="1"/><rect x="39" y="266.00" width="2" height="1"/><rect x="561" y="266.00" width="2" height="1"/><rect x="39" y="273.50" width="2" height="1"/><rect x="561" y="273.50" width="2" height="1"/><rect x="39" y="281.00" width="2" height="1"/><rect x="561" y="281.00" width="2" height="1"/><rect x="39" y="288.50" width="2" height="1"/><rect x="561" y="288.50" width="2" height="1"/><rect x="39" y="296.00" width="2" height="1"/><rect x="561" y="296.00" width="2" height="1"/><rect x="39" y="303.50" width="2" height="1"/><rect x="561" y="303.50" width="2" height="1"/><rect x="39" y="311.00" width="2" height="1"/><rect x="561" y="311.00" width="2" height="1"/><rect x="39" y="318.50" width="2" height="1"/><rect x="561" y="318.50" width="2" height="1"/><rect x="39" y="326.00" width="2" height="1"/><rect x="561" y="326.00" width="2" height="1"/><rect x="39" y="333.50" width="2" height="1"/><rect x="561" y="333.50" width="2" height="1"/><rect x="39" y="341.00" width="2" height="1"/><rect x="561" y="341.00" width="2" height="1"/><rect x="39" y="348.50" width="2" height="1"/><rect x="561" y="348.50" width="2" height="1"/><rect x="39" y="356.00" width="2" height="1"/><rect x="561" y="356.00" width="2" height="1"/><rect x="39" y="363.50" width="2" height="1"/><rect x="561" y="363.50" width="2" height="1"/></g><rect x="38.5" y="71.5" width="525" height="300" fill="none" stroke="#989898" stroke-width="1"/>
</svg>
<!-- top bar -->
<div class="box" style="left:2.5px;top:46px;width:53px;height:19px"></div>
<div class="t" style="left:11px;top:50.4px;font-size:12.6px;font-weight:bold;color:#f0a030">AUTO</div>
<div class="box" style="left:57.5px;top:46px;width:91px;height:19px"><div class="lbl" style="left:0;width:17px"></div></div>
<div class="t" style="left:60.8px;top:48.9px;font-size:13.8px;font-weight:bold;color:#f4f4f4">M</div>
<div class="t" style="left:88px;top:50.5px;font-size:10.3px;color:#d8d8d8">500.00μs</div>
<div class="box" style="left:149px;top:46px;width:92px;height:19px"><div class="lbl" style="left:0;width:18px"></div></div>
<div class="t" style="left:154px;top:48.9px;font-size:13.8px;font-weight:bold;color:#f4f4f4">D</div>
<div class="t" style="left:191px;top:50.5px;font-size:10.3px;color:#d8d8d8">0.00s</div>
<div class="box" style="left:243px;top:46px;width:113px;height:19px;background:#17181c;border-color:#222"></div>
<svg width="600" height="450" viewBox="0 0 600 450">
<path d="M246.5 54.5 L245 54.5 L245 62 L246.5 62" fill="none" stroke="#c8c8c8" stroke-width="1.2"/>
<path d="M352.5 54.5 L354 54.5 L354 62 L352.5 62" fill="none" stroke="#c8c8c8" stroke-width="1.2"/>
<polyline points="248.00,57 251.75,61 255.50,57 259.25,61 263.00,57 266.75,61 270.50,57 274.25,61 278.00,57 281.75,61 285.50,57 289.25,61 293.00,57 296.75,61 300.50,57 304.25,61 308.00,57 311.75,61 315.50,57 319.25,61 323.00,57 326.75,61 330.50,57 334.25,61 338.00,57 341.75,61 345.50,57 349.25,61 353.00,57" fill="none" stroke="#b8b8b8" stroke-width="1"/>
<polygon points="296.6,47.9 303,47.9 299.8,51.4" fill="#5c98ec"/>
</svg>
<div class="box" style="left:358px;top:46px;width:80.5px;height:19px"><div class="lbl" style="left:0;width:18px"></div></div>
<div class="t" style="left:363.4px;top:48.1px;font-size:13.6px;font-weight:bold;color:#f4f4f4">A</div>
<div class="t" style="left:395.5px;top:46.4px;font-size:8.4px;color:#d0d0d0">7Mpts</div>
<div class="t" style="left:389.5px;top:55.8px;font-size:8.4px;color:#d0d0d0">1.0GSa/s</div>
<div class="box" style="left:440.5px;top:46px;width:157.5px;height:19px"><div class="lbl" style="left:0;width:16px"></div></div>
<div class="t" style="left:445.5px;top:48.1px;font-size:13.6px;font-weight:bold;color:#f4f4f4">T</div>
<div class="abs" style="left:459.6px;top:51.8px;width:10px;height:9.1px;background:#ecec30;border-radius:1.8px"></div>
<svg width="600" height="450" viewBox="0 0 600 450"><path d="M463.8 53.6 H465.8 V58.8 H463.9 V55.5 L462.4 56.2 V54.6 Z" fill="#1a1a10"/></svg>
<div class="t" style="left:476.6px;top:51.4px;font-size:10.7px;transform:scaleX(0.91);transform-origin:0 0;color:#d4d4d4">U DC</div>
<div class="t" style="left:505.3px;top:51.4px;font-size:10.7px;transform:scaleX(0.91);transform-origin:0 0;color:#d0c43c">1.72V</div>
<!-- markers -->
<svg width="600" height="450" viewBox="0 0 600 450">
<polygon points="9,95 15,95 20.3,100.3 15,105.7 9,105.7" fill="#28d8e0"/>
<path d="M10.9 97.6 H12.2 Q14.1 97.6 14.1 100.6 Q14.1 103.6 12.2 103.6 H10.9 Z" fill="none" stroke="#0b5060" stroke-width="1.1"/><circle cx="15.8" cy="101" r="1.35" fill="none" stroke="#0b4060" stroke-width="1"/>
<polygon points="297.2,72.7 305,72.7 305,79 301.1,83.6 297.2,79" fill="#34ece4"/>
<text x="298.6" y="80" font-family="Liberation Sans" font-size="7" font-weight="bold" fill="#146474">T</text>
<polygon points="21.7,288.2 33.5,288.2 37.5,293 33.5,297.9 21.7,297.9" fill="#f0f020"/>
<path d="M27.1 289.8 H28.7 V295.7 H27.1 V291.7 L25.3 292.5 V291.2 Z" fill="#111"/>
<line x1="550" y1="227.5" x2="558" y2="227.5" stroke="#e8e8e0" stroke-width="1"/>
<polygon points="551,227.6 555.2,223.6 555.2,231.7" fill="#ececdc"/>
</svg>
<!-- table -->
<div class="abs" style="left:169.5px;top:109px;width:262.5px;height:223px;background:#17181c;border:1.5px solid #26272c;border-top:none"></div>
<div class="abs" style="left:169.5px;top:109px;width:262.5px;height:17.5px;background:#23262b"></div>
<div class="t" style="left:172.3px;top:113.5px;font-size:10.6px;color:#e0e0e0">Bus:RS232</div>
<svg width="600" height="450" viewBox="0 0 600 450">
<circle cx="391.5" cy="117.8" r="6.3" fill="none" stroke="#d4d4d4" stroke-width="1.2"/>
<path d="M388.1 114.4 L394.9 121.2 M394.9 114.4 L388.1 121.2" stroke="#d4d4d4" stroke-width="1.1"/>
</svg>
<div class="t" style="left:402.6px;top:112.7px;font-size:10.7px;color:#dcdcdc">Menu</div>
<div class="t" style="left:202.3px;top:131px;font-size:10.6px;letter-spacing:-0.3px;color:#2ab4a6">TIME</div>
<div class="t" style="left:276.5px;top:131px;font-size:10.6px;color:#2ab4a6">DATA</div>
<div class="t" style="left:359.8px;top:131px;font-size:10.6px;letter-spacing:-0.8px;color:#2ab4a6">CHECK</div>
<div style="position:absolute;left:171.5px;top:147.20px;width:245px;height:13.3px;background:#6c6c6c"></div><div class="tr" style="top:146.70px"><span class="n" style="left:172px">1</span><span class="v" style="left:202px">142.1us</span><span class="v" style="left:276.5px">0x18</span><span class="v" style="left:366.8px">01</span></div><div class="tr" style="top:163.15px"><span class="n" style="left:172px">2</span><span class="v" style="left:202px">281.1us</span><span class="v" style="left:276.5px">0x1</span><span class="v" style="left:366.8px">01</span></div><div class="tr" style="top:179.60px"><span class="n" style="left:172px">3</span><span class="v" style="left:202px">420.1us</span><span class="v" style="left:276.5px">0x2</span><span class="v" style="left:366.8px">01</span></div><div class="tr" style="top:196.05px"><span class="n" style="left:172px">4</span><span class="v" style="left:202px">559.1us</span><span class="v" style="left:276.5px">0x3</span><span class="v" style="left:366.8px">01</span></div><div class="tr" style="top:212.50px"><span class="n" style="left:172px">5</span><span class="v" style="left:202px">698.1us</span><span class="v" style="left:276.5px">0x4</span><span class="v" style="left:366.8px">01</span></div><div class="tr" style="top:228.95px"><span class="n" style="left:172px">6</span><span class="v" style="left:202px">837.1us</span><span class="v" style="left:276.5px">0x5</span><span class="v" style="left:366.8px">01</span></div><div class="tr" style="top:245.40px"><span class="n" style="left:172px">7</span><span class="v" style="left:202px">1.0ms</span><span class="v" style="left:276.5px">0x19</span><span class="v" style="left:366.8px">01</span></div><div class="tr" style="top:261.85px"><span class="n" style="left:172px">8</span><span class="v" style="left:202px">1.2ms</span><span class="v" style="left:276.5px">0x1</span><span class="v" style="left:366.8px">01</span></div><div class="tr" style="top:278.30px"><span class="n" style="left:172px">9</span><span class="v" style="left:202px">1.3ms</span><span class="v" style="left:276.5px">0x2</span><span class="v" style="left:366.8px">01</span></div><div class="tr" style="top:294.75px"><span class="n" style="left:172px">10</span><span class="v" style="left:202px">1.4ms</span><span class="v" style="left:276.5px">0x3</span><span class="v" style="left:366.8px">01</span></div><div class="tr" style="top:311.20px"><span class="n" style="left:172px">11</span><span class="v" style="left:202px">1.6ms</span><span class="v" style="left:276.5px">0x4</span><span class="v" style="left:366.8px">01</span></div>
<div class="abs" style="left:422.7px;top:126.5px;width:6.6px;height:205px;background:#1d5494"></div>
<div class="abs" style="left:423.3px;top:141.7px;width:5.6px;height:74.4px;background:#3a90e8;border-radius:3px"></div>
<!-- bottom bar -->
<div class="abs" style="left:4px;top:380.5px;width:127px;height:24px;background:#25272b;border:1px solid #ccc858"></div>
<div class="abs" style="left:4px;top:380.5px;width:24.5px;height:24px;background:#f4f000"></div>
<svg width="600" height="450" viewBox="0 0 600 450"><path d="M16.5 387 H19 V397.5 H16.6 V390.3 L13.6 391.7 V389.5 Z" fill="#111"/></svg>
<div class="abs" style="left:32px;top:391px;width:11px;height:1.2px;background:#d8d8d8"></div>
<div class="abs" style="left:32px;top:396px;width:11px;height:1.2px;background:repeating-linear-gradient(90deg,#d8d8d8 0 2px,transparent 2px 3px)"></div>
<div class="t" style="left:45.4px;top:388.3px;font-size:10.7px;transform:scaleX(0.87);transform-origin:0 0;color:#dcdcdc">1.00V 1X</div>
<div class="abs" style="left:132px;top:380.5px;width:127px;height:24px;background:#25272b;border:1px solid #50c0c0"><div class="lbl" style="left:0;width:24px;background:#303236"></div></div>
<div class="t" style="left:140.5px;top:384.2px;font-size:15px;font-weight:bold;color:#f0f0f0">2</div>
<div class="t" style="left:194.6px;top:388.2px;font-size:10.9px;transform:scaleX(0.8);transform-origin:0 0;color:#dcdcdc">OFF</div>
<div class="abs" style="left:261.5px;top:380.5px;width:254px;height:24px;background:#25272b;border:1px solid #a01a30"><div class="lbl" style="left:0;width:23px;background:#303236"></div></div>
<div class="t" style="left:266.6px;top:384.5px;font-size:14.6px;font-weight:bold;color:#f0f0f0">M</div>
<div class="t" style="left:388.6px;top:388.2px;font-size:10.9px;transform:scaleX(0.8);transform-origin:0 0;color:#dcdcdc">OFF</div>
<div class="abs" style="left:516.5px;top:379.5px;width:81.5px;height:25px;background:#1c1d21;border-radius:2px"></div>
<svg width="600" height="450" viewBox="0 0 600 450">
<g fill="none" stroke="#b4b4b4" stroke-width="1">
<rect x="525.5" y="387.5" width="4" height="3"/>
<path d="M527.5 390.5 V393.5 M523.2 395.5 V393.5 H531.8 V395.5"/>
<rect x="521.5" y="395.5" width="3.6" height="2.6"/>
<rect x="530" y="395.5" width="3.6" height="2.6"/>
<path d="M541.8 389 V397 M541.8 395 L538.8 393 V391.5 M541.8 394 L544.8 392 V390.5"/>
</g>
<g fill="#b4b4b4"><polygon points="540.3,389.5 543.3,389.5 541.8,387.5"/><circle cx="538.8" cy="391" r="1"/><rect x="544" y="389.5" width="1.8" height="1.8"/><circle cx="541.8" cy="397.4" r="1.3"/></g>
</svg>
<div class="t" style="left:563.5px;top:383px;font-size:8.4px;color:#a0a0a0">18:47</div>
<div class="t" style="left:552.5px;top:394.2px;font-size:8.2px;letter-spacing:0.3px;color:#a0a0a0">2023.12.21</div>
</body></html>
